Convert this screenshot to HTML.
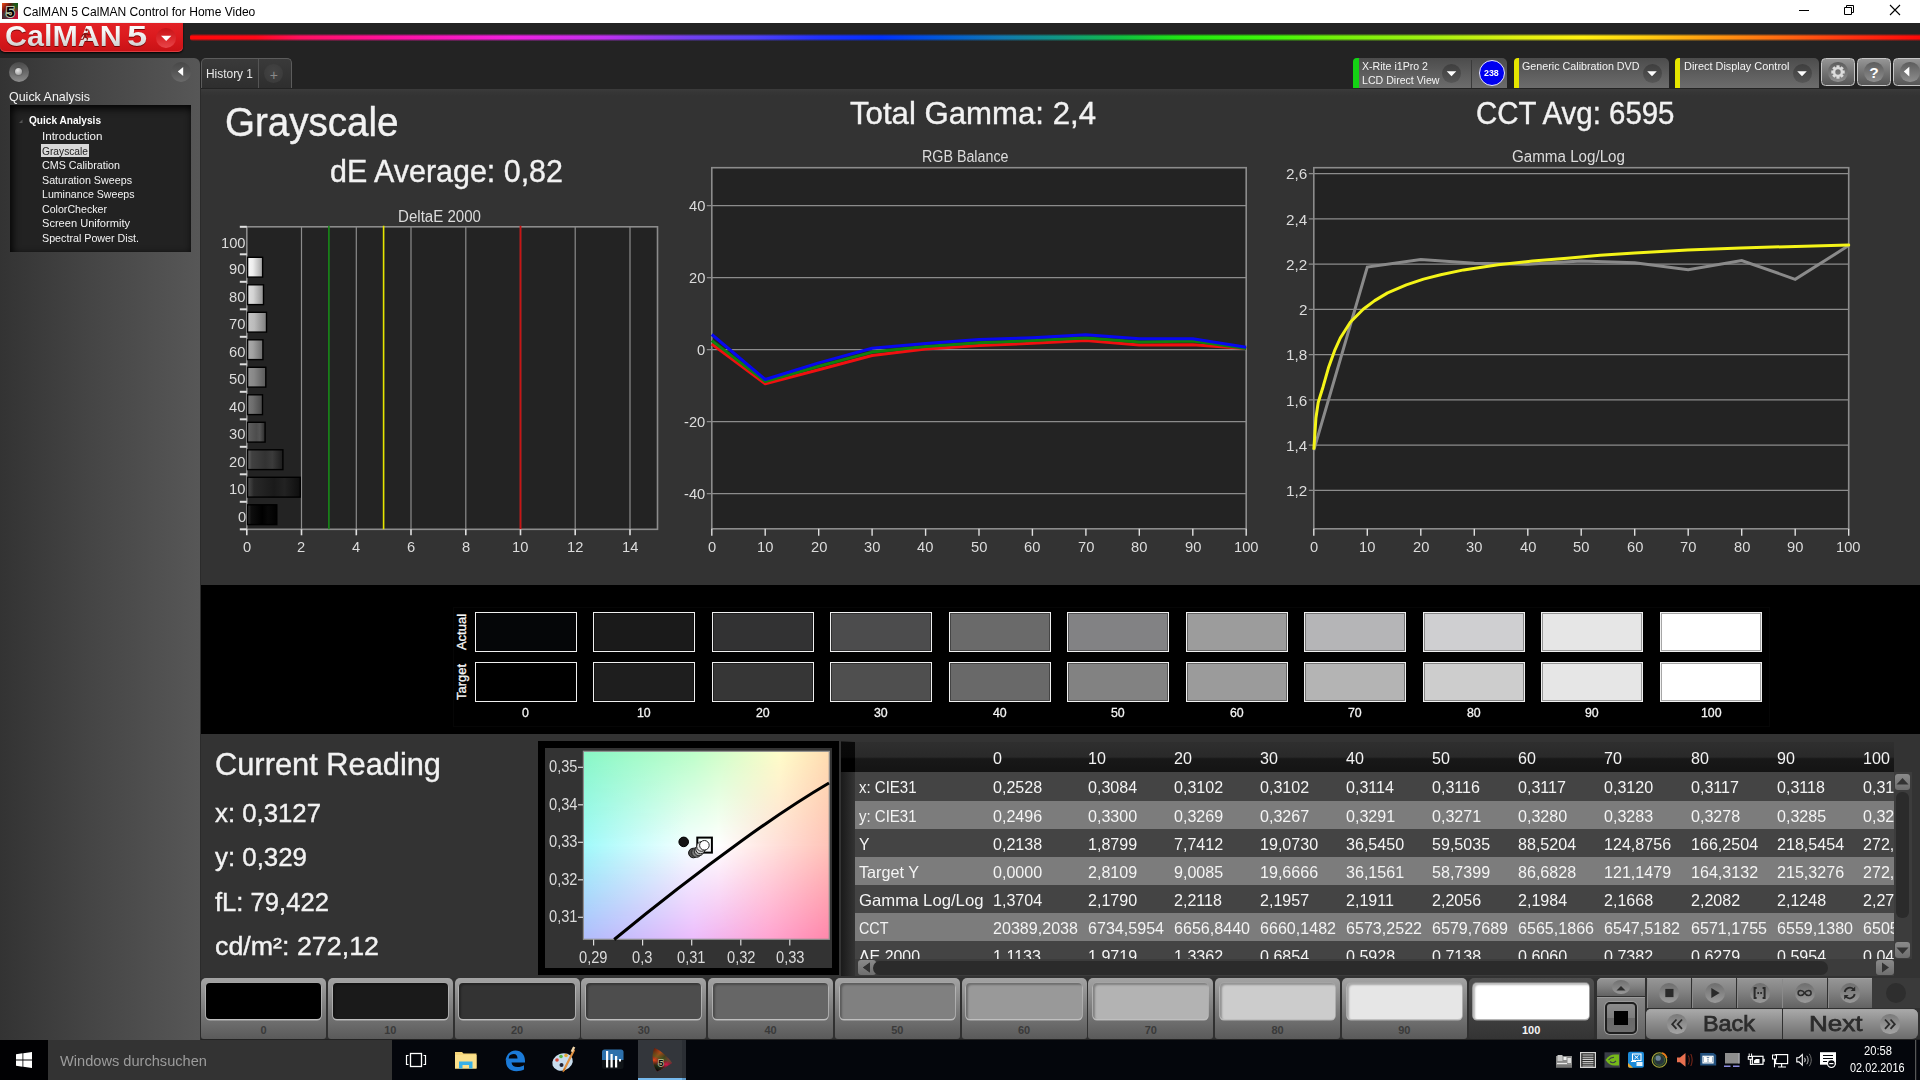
<!DOCTYPE html>
<html lang="de"><head><meta charset="utf-8"><title>CalMAN 5 CalMAN Control for Home Video</title>
<style>
html,body{margin:0;padding:0;background:#232323;}
body{width:1920px;height:1080px;position:relative;overflow:hidden;font-family:"Liberation Sans",sans-serif;}
.t{position:absolute;white-space:nowrap;line-height:1;transform-origin:0 50%;}
svg{position:absolute;left:0;top:0;overflow:visible}
svg text{font-family:"Liberation Sans",sans-serif;}
</style></head><body>
<div style="position:absolute;left:0px;top:0px;width:1920px;height:23px;background:#ffffff;"></div>
<svg width="24" height="24"><defs><linearGradient id="ig" x1="0" y1="0" x2="1" y2="1"><stop offset="0" stop-color="#f05018"/><stop offset="0.3" stop-color="#701010"/><stop offset="0.5" stop-color="#385a28"/><stop offset="0.75" stop-color="#a01838"/><stop offset="1" stop-color="#d00838"/></linearGradient><linearGradient id="ig2" x1="1" y1="0" x2="0" y2="1"><stop offset="0" stop-color="#0a5a10"/><stop offset="0.35" stop-color="#0a5a10" stop-opacity="0"/><stop offset="0.7" stop-color="#402080" stop-opacity="0"/><stop offset="1" stop-color="#501010"/></linearGradient></defs><rect x="2" y="3" width="16" height="16" fill="url(#ig)"/><rect x="2" y="3" width="16" height="16" fill="url(#ig2)"/><text x="10.200" y="16.600" font-size="15.500" font-weight="bold" fill="#000" stroke="#d8ecd0" stroke-width="1.800" paint-order="stroke" stroke-opacity="0.800" text-anchor="middle">5</text></svg>
<span class="t" style="left:23.00px;top:6.10px;font-size:12.4px;color:#000;transform:scaleX(0.9732);">CalMAN 5 CalMAN Control for Home Video</span>
<svg width="1920" height="23"><path d="M1799 10.5h10" stroke="#000" stroke-width="1" fill="none"/><path d="M1844.5 7.5h7v7h-7z M1846.5 7.5v-2h7v7h-2" stroke="#000" stroke-width="1" fill="none"/><path d="M1890 5l10 10M1900 5l-10 10" stroke="#000" stroke-width="1.1" fill="none"/></svg>
<div style="position:absolute;left:0px;top:23px;width:1920px;height:66px;background:#232323;"></div>
<div style="position:absolute;left:190px;top:34px;width:1730px;height:7.4px;background:linear-gradient(180deg,rgba(35,35,35,.9) 0%,rgba(35,35,35,0) 32%,rgba(35,35,35,0) 68%,rgba(35,35,35,.9) 100%),linear-gradient(90deg,#ff0808 0%,#ff0818 3.8%,#ff1060 6.4%,#ff10a0 11.6%,#f020e0 18.6%,#c030f0 23.9%,#7040f0 29%,#5040f8 32.6%,#2030ff 36.4%,#0030ff 39.9%,#0058d8 43.4%,#1078b0 46.9%,#109880 50.4%,#10c040 53.9%,#20e810 57.4%,#40f808 62.7%,#70f008 66.1%,#a0f010 71.7%,#e0f010 76.9%,#fff010 80.5%,#ffd010 83.9%,#ffa010 87.5%,#ff6010 92.7%,#ff3010 96.2%,#ff0808 100%);border-radius:3px 0 0 3px;"></div>
<div style="position:absolute;left:0px;top:23px;width:182.5px;height:29.3px;background:linear-gradient(180deg,#e22226 0%,#dc1a1e 45%,#c81216 100%);border-radius:0 0 5px 5px;box-shadow:0 1px 2px #000,inset 0 -1px 0 rgba(255,140,140,.35);"></div>
<span class="t" style="left:4.80px;top:21.40px;font-size:29.3px;color:#f0eeee;font-weight:bold;transform:scaleX(1.0398);background:linear-gradient(180deg,#ffffff 0%,#f4f4f4 40%,#c4c4c4 100%);-webkit-background-clip:text;background-clip:text;color:transparent;filter:drop-shadow(0 1px 0.6px rgba(90,0,0,.75));">CalMAN</span>
<span class="t" style="left:127.40px;top:21.40px;font-size:29.3px;color:#f0eeee;font-weight:bold;transform:scaleX(1.2396);background:linear-gradient(180deg,#ffffff 0%,#f4f4f4 40%,#c4c4c4 100%);-webkit-background-clip:text;background-clip:text;color:transparent;filter:drop-shadow(0 1px 0.6px rgba(90,0,0,.75));">5</span>
<svg width="200" height="60"><path d="M86.500 31.200a1.300 1.300 0 1 1 0.100 0zM84.200 33l2.600-0.300l1.800 1.600l1.900-0.400l0.200 0.800l-2.500 0.700l-1.300-0.900l-0.700 2.200l2 1.500l-0.900 2.800l-0.900-0.200l0.500-2.100l-2.200-1.200l-1.300 2.300l-2.700 0.300l-0.100-0.900l2.100-0.500l1.500-3.600l-1.200 0.300l-1 1.600l-0.800-0.500l1.300-2.200z" fill="#8a1010"/></svg>
<div style="position:absolute;left:156.2px;top:27.8px;width:19.8px;height:19.8px;border-radius:50%;background:linear-gradient(180deg,#c81418 0%,#dc2a2e 55%,#e8464a 100%);"></div>
<svg width="200" height="60"><path d="M161 35.800h10.400l-5.200 5.200z" fill="#fff"/></svg>
<div style="position:absolute;left:0px;top:58px;width:199.5px;height:982px;background:linear-gradient(90deg,#333 0%,#454545 45%,#575757 100%);border-radius:0 6px 0 0;"></div>
<div style="position:absolute;left:199.5px;top:88px;width:1.5px;height:952px;background:#2b2b2b;"></div>
<div style="position:absolute;left:9px;top:62px;width:20px;height:20px;border-radius:50%;background:linear-gradient(180deg,#4a4a4a 0%,#6c6c6c 55%,#8e8e8e 100%);"></div>
<div style="position:absolute;left:14.7px;top:67.7px;width:7.5px;height:7.5px;border-radius:50%;background:radial-gradient(circle at 38% 32%,#e6e6e6 0,#b4b4b4 55%,#8a8a8a 100%);box-shadow:0 0 1.5px rgba(0,0,0,.6);"></div>
<div style="position:absolute;left:171px;top:62px;width:20px;height:20px;border-radius:50%;background:linear-gradient(180deg,#484848 0%,#565656 50%,#6a6a6a 100%);"></div>
<svg width="200" height="100"><path d="M177.800 71.500l5.400-4.400v8.800z" fill="#fff"/></svg>
<span class="t" style="left:9.00px;top:90.00px;font-size:13px;color:#f2f2f2;transform:scaleX(0.9582);">Quick Analysis</span>
<div style="position:absolute;left:10px;top:105px;width:181px;height:147px;background:#222;box-shadow:inset 2px 3px 8px #000;"></div>
<span class="t" style="left:29.00px;top:114.97px;font-size:11.5px;color:#fff;font-weight:bold;transform:scaleX(0.8777);">Quick Analysis</span>
<svg width="200" height="200"><path d="M19 123h3.5v-3.5z" fill="#555"/></svg>
<div style="position:absolute;left:41px;top:143.5px;width:47.5px;height:13px;background:#d8d8d8;"></div>
<span class="t" style="left:42.00px;top:131.19px;font-size:11px;color:#f4f4f4;transform:scaleX(1.0525);">Introduction</span>
<span class="t" style="left:42.00px;top:145.69px;font-size:11px;color:#222;transform:scaleX(0.9290);">Grayscale</span>
<span class="t" style="left:42.00px;top:160.19px;font-size:11px;color:#f4f4f4;transform:scaleX(0.9740);">CMS Calibration</span>
<span class="t" style="left:42.00px;top:174.69px;font-size:11px;color:#f4f4f4;transform:scaleX(0.9747);">Saturation Sweeps</span>
<span class="t" style="left:42.00px;top:189.19px;font-size:11px;color:#f4f4f4;transform:scaleX(0.9635);">Luminance Sweeps</span>
<span class="t" style="left:42.00px;top:204.19px;font-size:11px;color:#f4f4f4;transform:scaleX(0.9666);">ColorChecker</span>
<span class="t" style="left:42.00px;top:218.19px;font-size:11px;color:#f4f4f4;transform:scaleX(1.0067);">Screen Uniformity</span>
<span class="t" style="left:42.00px;top:233.19px;font-size:11px;color:#f4f4f4;transform:scaleX(0.9734);">Spectral Power Dist.</span>
<div style="position:absolute;left:200.5px;top:58px;width:91.5px;height:30px;background:linear-gradient(180deg,#3a3a3a,#2e2e2e);border-radius:5px 5px 0 0;border:1px solid #5c5c5c;border-bottom:none;box-sizing:border-box;"></div>
<div style="position:absolute;left:258px;top:59px;width:1px;height:29px;background:#555;"></div>
<span class="t" style="left:206.00px;top:67.84px;font-size:12px;color:#e8e8e8;transform:scaleX(0.9927);">History 1</span>
<div style="position:absolute;left:264px;top:64px;width:19px;height:19px;border-radius:50%;background:radial-gradient(circle at 50% 40%,#444,#383838);"></div>
<span class="t" style="left:269.71px;top:68.15px;font-size:14px;color:#8a8a8a;">+</span>
<div style="position:absolute;left:201px;top:88.6px;width:1719px;height:496.4px;background:linear-gradient(180deg,#3b3b3b 0,#363636 3px,#333 7px);"></div>
<div style="position:absolute;left:201px;top:585px;width:1719px;height:149px;background:#000;"></div>
<div style="position:absolute;left:201px;top:734px;width:1719px;height:244px;background:#333333;"></div>
<span class="t" style="left:224.50px;top:101.74px;font-size:40px;color:#f2f2f2;transform:scaleX(0.9636);-webkit-text-stroke:0.4px #f2f2f2;">Grayscale</span>
<span class="t" style="left:329.50px;top:156.10px;font-size:31.3px;color:#f2f2f2;transform:scaleX(0.9725);-webkit-text-stroke:0.4px #f2f2f2;">dE Average: 0,82</span>
<span class="t" style="left:849.80px;top:97.54px;font-size:31.5px;color:#f2f2f2;transform:scaleX(0.9895);-webkit-text-stroke:0.4px #f2f2f2;">Total Gamma: 2,4</span>
<span class="t" style="left:1475.80px;top:97.64px;font-size:31.5px;color:#f2f2f2;transform:scaleX(0.9342);-webkit-text-stroke:0.4px #f2f2f2;">CCT Avg: 6595</span>
<svg width="1920" height="1080"><defs><linearGradient id="b0" x1="0" x2="1"><stop offset="0" stop-color="rgb(52,52,52)"/><stop offset="0.12" stop-color="rgb(14,14,14)"/><stop offset="0.5" stop-color="rgb(0,0,0)"/><stop offset="0.7" stop-color="rgb(8,8,8)"/><stop offset="1" stop-color="rgb(0,0,0)"/></linearGradient><linearGradient id="b1" x1="0" x2="1"><stop offset="0" stop-color="rgb(78,78,78)"/><stop offset="0.12" stop-color="rgb(40,40,40)"/><stop offset="0.5" stop-color="rgb(26,26,26)"/><stop offset="0.7" stop-color="rgb(34,34,34)"/><stop offset="1" stop-color="rgb(14,14,14)"/></linearGradient><linearGradient id="b2" x1="0" x2="1"><stop offset="0" stop-color="rgb(103,103,103)"/><stop offset="0.12" stop-color="rgb(65,65,65)"/><stop offset="0.5" stop-color="rgb(51,51,51)"/><stop offset="0.7" stop-color="rgb(59,59,59)"/><stop offset="1" stop-color="rgb(28,28,28)"/></linearGradient><linearGradient id="b3" x1="0" x2="1"><stop offset="0" stop-color="rgb(129,129,129)"/><stop offset="0.12" stop-color="rgb(91,91,91)"/><stop offset="0.5" stop-color="rgb(77,77,77)"/><stop offset="0.7" stop-color="rgb(85,85,85)"/><stop offset="1" stop-color="rgb(42,42,42)"/></linearGradient><linearGradient id="b4" x1="0" x2="1"><stop offset="0" stop-color="rgb(120,120,120)"/><stop offset="0.35" stop-color="rgb(110,110,110)"/><stop offset="1" stop-color="rgb(71,71,71)"/></linearGradient><linearGradient id="b5" x1="0" x2="1"><stop offset="0" stop-color="rgb(146,146,146)"/><stop offset="0.35" stop-color="rgb(136,136,136)"/><stop offset="1" stop-color="rgb(89,89,89)"/></linearGradient><linearGradient id="b6" x1="0" x2="1"><stop offset="0" stop-color="rgb(171,171,171)"/><stop offset="0.35" stop-color="rgb(161,161,161)"/><stop offset="1" stop-color="rgb(107,107,107)"/></linearGradient><linearGradient id="b7" x1="0" x2="1"><stop offset="0" stop-color="rgb(197,197,197)"/><stop offset="0.35" stop-color="rgb(187,187,187)"/><stop offset="1" stop-color="rgb(125,125,125)"/></linearGradient><linearGradient id="b8" x1="0" x2="1"><stop offset="0" stop-color="rgb(222,222,222)"/><stop offset="0.35" stop-color="rgb(212,212,212)"/><stop offset="1" stop-color="rgb(142,142,142)"/></linearGradient><linearGradient id="b9" x1="0" x2="1"><stop offset="0" stop-color="rgb(248,248,248)"/><stop offset="0.35" stop-color="rgb(238,238,238)"/><stop offset="1" stop-color="rgb(161,161,161)"/></linearGradient><linearGradient id="b10" x1="0" x2="1"><stop offset="0" stop-color="rgb(255,255,255)"/><stop offset="0.35" stop-color="rgb(255,255,255)"/><stop offset="1" stop-color="rgb(178,178,178)"/></linearGradient></defs><rect x="246.8" y="226.8" width="410.7" height="302.49999999999994" fill="#232323" stroke="#8c8c8c" stroke-width="1.6"/><path d="M301.5 226.8V529.3" stroke="#8c8c8c" stroke-width="1.2"/><path d="M356.3 226.8V529.3" stroke="#8c8c8c" stroke-width="1.2"/><path d="M411.0 226.8V529.3" stroke="#8c8c8c" stroke-width="1.2"/><path d="M465.8 226.8V529.3" stroke="#8c8c8c" stroke-width="1.2"/><path d="M520.5 226.8V529.3" stroke="#8c8c8c" stroke-width="1.2"/><path d="M575.2 226.8V529.3" stroke="#8c8c8c" stroke-width="1.2"/><path d="M630.0 226.8V529.3" stroke="#8c8c8c" stroke-width="1.2"/><path d="M328.9 225.8V529.3" stroke="#188a18" stroke-width="1.6"/><path d="M383.6 225.8V529.3" stroke="#e6e600" stroke-width="1.6"/><path d="M520.5 225.8V529.3" stroke="#c81414" stroke-width="1.8"/><path d="M239.8 501.8h7" stroke="#e0e0e0" stroke-width="2"/><rect x="247.6" y="504.8" width="29.2" height="19.8" fill="url(#b0)" stroke="#000" stroke-width="1.4"/><path d="M239.8 474.3h7" stroke="#e0e0e0" stroke-width="2"/><rect x="247.6" y="477.3" width="52.7" height="19.8" fill="url(#b1)" stroke="#000" stroke-width="1.4"/><path d="M239.8 446.8h7" stroke="#e0e0e0" stroke-width="2"/><rect x="247.6" y="449.8" width="35.3" height="19.8" fill="url(#b2)" stroke="#000" stroke-width="1.4"/><path d="M239.8 419.3h7" stroke="#e0e0e0" stroke-width="2"/><rect x="247.6" y="422.3" width="17.5" height="19.8" fill="url(#b3)" stroke="#000" stroke-width="1.4"/><path d="M239.8 391.8h7" stroke="#e0e0e0" stroke-width="2"/><rect x="247.6" y="394.8" width="14.9" height="19.8" fill="url(#b4)" stroke="#000" stroke-width="1.4"/><path d="M239.8 364.3h7" stroke="#e0e0e0" stroke-width="2"/><rect x="247.6" y="367.3" width="18.2" height="19.8" fill="url(#b5)" stroke="#000" stroke-width="1.4"/><path d="M239.8 336.8h7" stroke="#e0e0e0" stroke-width="2"/><rect x="247.6" y="339.8" width="15.3" height="19.8" fill="url(#b6)" stroke="#000" stroke-width="1.4"/><path d="M239.8 309.3h7" stroke="#e0e0e0" stroke-width="2"/><rect x="247.6" y="312.3" width="18.9" height="19.8" fill="url(#b7)" stroke="#000" stroke-width="1.4"/><path d="M239.8 281.8h7" stroke="#e0e0e0" stroke-width="2"/><rect x="247.6" y="284.8" width="15.9" height="19.8" fill="url(#b8)" stroke="#000" stroke-width="1.4"/><path d="M239.8 254.3h7" stroke="#e0e0e0" stroke-width="2"/><rect x="247.6" y="257.3" width="15.0" height="19.8" fill="url(#b9)" stroke="#000" stroke-width="1.4"/><path d="M239.8 226.8h7" stroke="#e0e0e0" stroke-width="2"/><path d="M239.8 529.3h7" stroke="#e0e0e0" stroke-width="2"/><path d="M246.8 529.3v6" stroke="#e0e0e0" stroke-width="1.6"/><path d="M301.5 529.3v6" stroke="#e0e0e0" stroke-width="1.6"/><path d="M356.3 529.3v6" stroke="#e0e0e0" stroke-width="1.6"/><path d="M411.0 529.3v6" stroke="#e0e0e0" stroke-width="1.6"/><path d="M465.8 529.3v6" stroke="#e0e0e0" stroke-width="1.6"/><path d="M520.5 529.3v6" stroke="#e0e0e0" stroke-width="1.6"/><path d="M575.2 529.3v6" stroke="#e0e0e0" stroke-width="1.6"/><path d="M630.0 529.3v6" stroke="#e0e0e0" stroke-width="1.6"/><rect x="711.8" y="167.7" width="534.4000000000001" height="361.09999999999997" fill="#232323" stroke="#8c8c8c" stroke-width="1.6"/><path d="M706.8 205.6H1246.2" stroke="#8c8c8c" stroke-width="1.3"/><path d="M706.8 277.6H1246.2" stroke="#8c8c8c" stroke-width="1.3"/><path d="M706.8 349.6H1246.2" stroke="#8c8c8c" stroke-width="1.3"/><path d="M706.8 421.6H1246.2" stroke="#8c8c8c" stroke-width="1.3"/><path d="M706.8 493.6H1246.2" stroke="#8c8c8c" stroke-width="1.3"/><path d="M711.8 528.8v7" stroke="#e0e0e0" stroke-width="1.4"/><path d="M765.2 528.8v7" stroke="#e0e0e0" stroke-width="1.4"/><path d="M818.7 528.8v7" stroke="#e0e0e0" stroke-width="1.4"/><path d="M872.1 528.8v7" stroke="#e0e0e0" stroke-width="1.4"/><path d="M925.6 528.8v7" stroke="#e0e0e0" stroke-width="1.4"/><path d="M979.0 528.8v7" stroke="#e0e0e0" stroke-width="1.4"/><path d="M1032.4 528.8v7" stroke="#e0e0e0" stroke-width="1.4"/><path d="M1085.9 528.8v7" stroke="#e0e0e0" stroke-width="1.4"/><path d="M1139.3 528.8v7" stroke="#e0e0e0" stroke-width="1.4"/><path d="M1192.8 528.8v7" stroke="#e0e0e0" stroke-width="1.4"/><path d="M1246.2 528.8v7" stroke="#e0e0e0" stroke-width="1.4"/><polyline points="711.8,344.0 765.2,383.8 818.7,369.8 872.1,355.5 925.6,348.9 979.0,345.6 1032.4,343.3 1085.9,340.6 1139.3,344.9 1192.8,344.7 1246.2,348.5" fill="none" stroke="#f01010" stroke-width="3" stroke-linejoin="round"/><polyline points="711.8,340.6 765.2,381.6 818.7,366.2 872.1,352.1 925.6,346.4 979.0,342.8 1032.4,340.6 1085.9,337.9 1139.3,342.0 1192.8,341.1 1246.2,348.5" fill="none" stroke="#108010" stroke-width="3" stroke-linejoin="round"/><polyline points="711.8,334.5 765.2,379.5 818.7,362.9 872.1,348.3 925.6,343.5 979.0,339.5 1032.4,337.7 1085.9,334.8 1139.3,338.8 1192.8,338.8 1246.2,347.3" fill="none" stroke="#0808f0" stroke-width="3" stroke-linejoin="round"/><rect x="1313.8" y="167.7" width="534.9000000000001" height="361.09999999999997" fill="#232323" stroke="#8c8c8c" stroke-width="1.6"/><path d="M1308.8 173.6H1848.7" stroke="#8c8c8c" stroke-width="1.3"/><path d="M1308.8 218.9H1848.7" stroke="#8c8c8c" stroke-width="1.3"/><path d="M1308.8 264.1H1848.7" stroke="#8c8c8c" stroke-width="1.3"/><path d="M1308.8 309.4H1848.7" stroke="#8c8c8c" stroke-width="1.3"/><path d="M1308.8 354.6H1848.7" stroke="#8c8c8c" stroke-width="1.3"/><path d="M1308.8 399.9H1848.7" stroke="#8c8c8c" stroke-width="1.3"/><path d="M1308.8 445.2H1848.7" stroke="#8c8c8c" stroke-width="1.3"/><path d="M1308.8 490.4H1848.7" stroke="#8c8c8c" stroke-width="1.3"/><path d="M1313.8 528.8v7" stroke="#e0e0e0" stroke-width="1.4"/><path d="M1367.3 528.8v7" stroke="#e0e0e0" stroke-width="1.4"/><path d="M1420.8 528.8v7" stroke="#e0e0e0" stroke-width="1.4"/><path d="M1474.3 528.8v7" stroke="#e0e0e0" stroke-width="1.4"/><path d="M1527.8 528.8v7" stroke="#e0e0e0" stroke-width="1.4"/><path d="M1581.2 528.8v7" stroke="#e0e0e0" stroke-width="1.4"/><path d="M1634.7 528.8v7" stroke="#e0e0e0" stroke-width="1.4"/><path d="M1688.2 528.8v7" stroke="#e0e0e0" stroke-width="1.4"/><path d="M1741.7 528.8v7" stroke="#e0e0e0" stroke-width="1.4"/><path d="M1795.2 528.8v7" stroke="#e0e0e0" stroke-width="1.4"/><path d="M1848.7 528.8v7" stroke="#e0e0e0" stroke-width="1.4"/><polyline points="1313.8,450.1 1367.3,267.1 1420.8,259.6 1474.3,263.3 1527.8,264.3 1581.2,261.1 1634.7,262.7 1688.2,269.8 1741.7,260.5 1795.2,279.3 1848.7,245.6" fill="none" stroke="#8a8a8a" stroke-width="3" stroke-linejoin="miter"/><polyline points="1313.9,448.5 1315.9,418.3 1318.2,402.5 1323.1,386.7 1328.8,366.7 1334.5,350.9 1340.3,338 1350.3,322.2 1363.2,309.3 1374.7,300.6 1387.6,292.9 1406.3,284.9 1423.5,279.1 1440.7,274.8 1463.7,269.9 1498.1,264.8 1532.6,261 1567,258.2 1600,255.3 1634.7,252.9 1687.7,250 1740.7,248 1795.7,246.4 1848.7,245.1" fill="none" stroke="#f4f418" stroke-width="3" stroke-linejoin="round" stroke-linecap="round"/></svg>
<span class="t" style="left:398.30px;top:208.66px;font-size:16px;color:#dcdcdc;transform:scaleX(0.9425);">DeltaE 2000</span>
<span class="t" style="left:922.25px;top:149.16px;font-size:16px;color:#dcdcdc;transform:scaleX(0.8923);">RGB Balance</span>
<span class="t" style="left:1511.50px;top:149.16px;font-size:16px;color:#dcdcdc;transform:scaleX(0.9481);">Gamma Log/Log</span>
<span class="t" style="left:237.62px;top:508.70px;font-size:15px;color:#dcdcdc;transform:scaleX(0.9800);">0</span>
<span class="t" style="left:229.45px;top:481.20px;font-size:15px;color:#dcdcdc;transform:scaleX(0.9800);">10</span>
<span class="t" style="left:229.45px;top:453.70px;font-size:15px;color:#dcdcdc;transform:scaleX(0.9800);">20</span>
<span class="t" style="left:229.45px;top:426.20px;font-size:15px;color:#dcdcdc;transform:scaleX(0.9800);">30</span>
<span class="t" style="left:229.45px;top:398.70px;font-size:15px;color:#dcdcdc;transform:scaleX(0.9800);">40</span>
<span class="t" style="left:229.45px;top:371.20px;font-size:15px;color:#dcdcdc;transform:scaleX(0.9800);">50</span>
<span class="t" style="left:229.45px;top:343.70px;font-size:15px;color:#dcdcdc;transform:scaleX(0.9800);">60</span>
<span class="t" style="left:229.45px;top:316.20px;font-size:15px;color:#dcdcdc;transform:scaleX(0.9800);">70</span>
<span class="t" style="left:229.45px;top:288.70px;font-size:15px;color:#dcdcdc;transform:scaleX(0.9800);">80</span>
<span class="t" style="left:229.45px;top:261.20px;font-size:15px;color:#dcdcdc;transform:scaleX(0.9800);">90</span>
<span class="t" style="left:221.27px;top:235.20px;font-size:15px;color:#dcdcdc;transform:scaleX(0.9800);">100</span>
<span class="t" style="left:242.71px;top:538.50px;font-size:15px;color:#dcdcdc;transform:scaleX(0.9800);">0</span>
<span class="t" style="left:297.45px;top:538.50px;font-size:15px;color:#dcdcdc;transform:scaleX(0.9800);">2</span>
<span class="t" style="left:352.19px;top:538.50px;font-size:15px;color:#dcdcdc;transform:scaleX(0.9800);">4</span>
<span class="t" style="left:406.93px;top:538.50px;font-size:15px;color:#dcdcdc;transform:scaleX(0.9800);">6</span>
<span class="t" style="left:461.67px;top:538.50px;font-size:15px;color:#dcdcdc;transform:scaleX(0.9800);">8</span>
<span class="t" style="left:512.32px;top:538.50px;font-size:15px;color:#dcdcdc;transform:scaleX(0.9800);">10</span>
<span class="t" style="left:567.06px;top:538.50px;font-size:15px;color:#dcdcdc;transform:scaleX(0.9800);">12</span>
<span class="t" style="left:621.80px;top:538.50px;font-size:15px;color:#dcdcdc;transform:scaleX(0.9800);">14</span>
<span class="t" style="left:689.15px;top:198.10px;font-size:15px;color:#dcdcdc;transform:scaleX(0.9800);">40</span>
<span class="t" style="left:689.15px;top:270.10px;font-size:15px;color:#dcdcdc;transform:scaleX(0.9800);">20</span>
<span class="t" style="left:697.32px;top:342.10px;font-size:15px;color:#dcdcdc;transform:scaleX(0.9800);">0</span>
<span class="t" style="left:684.25px;top:414.10px;font-size:15px;color:#dcdcdc;transform:scaleX(0.9800);">-20</span>
<span class="t" style="left:684.25px;top:486.10px;font-size:15px;color:#dcdcdc;transform:scaleX(0.9800);">-40</span>
<span class="t" style="left:707.71px;top:538.50px;font-size:15px;color:#dcdcdc;transform:scaleX(0.9800);">0</span>
<span class="t" style="left:1309.71px;top:538.50px;font-size:15px;color:#dcdcdc;transform:scaleX(0.9800);">0</span>
<span class="t" style="left:757.06px;top:538.50px;font-size:15px;color:#dcdcdc;transform:scaleX(0.9800);">10</span>
<span class="t" style="left:1359.11px;top:538.50px;font-size:15px;color:#dcdcdc;transform:scaleX(0.9800);">10</span>
<span class="t" style="left:810.50px;top:538.50px;font-size:15px;color:#dcdcdc;transform:scaleX(0.9800);">20</span>
<span class="t" style="left:1412.60px;top:538.50px;font-size:15px;color:#dcdcdc;transform:scaleX(0.9800);">20</span>
<span class="t" style="left:863.94px;top:538.50px;font-size:15px;color:#dcdcdc;transform:scaleX(0.9800);">30</span>
<span class="t" style="left:1466.09px;top:538.50px;font-size:15px;color:#dcdcdc;transform:scaleX(0.9800);">30</span>
<span class="t" style="left:917.38px;top:538.50px;font-size:15px;color:#dcdcdc;transform:scaleX(0.9800);">40</span>
<span class="t" style="left:1519.58px;top:538.50px;font-size:15px;color:#dcdcdc;transform:scaleX(0.9800);">40</span>
<span class="t" style="left:970.82px;top:538.50px;font-size:15px;color:#dcdcdc;transform:scaleX(0.9800);">50</span>
<span class="t" style="left:1573.07px;top:538.50px;font-size:15px;color:#dcdcdc;transform:scaleX(0.9800);">50</span>
<span class="t" style="left:1024.26px;top:538.50px;font-size:15px;color:#dcdcdc;transform:scaleX(0.9800);">60</span>
<span class="t" style="left:1626.56px;top:538.50px;font-size:15px;color:#dcdcdc;transform:scaleX(0.9800);">60</span>
<span class="t" style="left:1077.70px;top:538.50px;font-size:15px;color:#dcdcdc;transform:scaleX(0.9800);">70</span>
<span class="t" style="left:1680.05px;top:538.50px;font-size:15px;color:#dcdcdc;transform:scaleX(0.9800);">70</span>
<span class="t" style="left:1131.14px;top:538.50px;font-size:15px;color:#dcdcdc;transform:scaleX(0.9800);">80</span>
<span class="t" style="left:1733.54px;top:538.50px;font-size:15px;color:#dcdcdc;transform:scaleX(0.9800);">80</span>
<span class="t" style="left:1184.58px;top:538.50px;font-size:15px;color:#dcdcdc;transform:scaleX(0.9800);">90</span>
<span class="t" style="left:1787.03px;top:538.50px;font-size:15px;color:#dcdcdc;transform:scaleX(0.9800);">90</span>
<span class="t" style="left:1233.94px;top:538.50px;font-size:15px;color:#dcdcdc;transform:scaleX(0.9800);">100</span>
<span class="t" style="left:1836.44px;top:538.50px;font-size:15px;color:#dcdcdc;transform:scaleX(0.9800);">100</span>
<span class="t" style="left:1286.23px;top:166.30px;font-size:15px;color:#dcdcdc;transform:scaleX(1.0200);">2,6</span>
<span class="t" style="left:1286.23px;top:211.56px;font-size:15px;color:#dcdcdc;transform:scaleX(1.0200);">2,4</span>
<span class="t" style="left:1286.23px;top:256.82px;font-size:15px;color:#dcdcdc;transform:scaleX(1.0200);">2,2</span>
<span class="t" style="left:1298.99px;top:302.08px;font-size:15px;color:#dcdcdc;transform:scaleX(1.0200);">2</span>
<span class="t" style="left:1286.23px;top:347.34px;font-size:15px;color:#dcdcdc;transform:scaleX(1.0200);">1,8</span>
<span class="t" style="left:1286.23px;top:392.60px;font-size:15px;color:#dcdcdc;transform:scaleX(1.0200);">1,6</span>
<span class="t" style="left:1286.23px;top:437.86px;font-size:15px;color:#dcdcdc;transform:scaleX(1.0200);">1,4</span>
<span class="t" style="left:1286.23px;top:483.12px;font-size:15px;color:#dcdcdc;transform:scaleX(1.0200);">1,2</span>
<div style="position:absolute;left:453px;top:607px;width:1317px;height:120px;border:1px solid #060606;box-sizing:border-box;"></div>
<div style="position:absolute;left:474.8px;top:612px;width:102px;height:40px;background:#050608;border:1.3px solid #f0f0f0;box-sizing:border-box;box-shadow:inset 0 0 0 1px rgba(0,0,0,.35);"></div>
<div style="position:absolute;left:474.8px;top:662px;width:102px;height:40px;background:#000000;border:1.3px solid #f0f0f0;box-sizing:border-box;box-shadow:inset 0 0 0 1px rgba(0,0,0,.35);"></div>
<span class="t" style="left:522.37px;top:706.30px;font-size:13px;color:#f4f4f4;transform:scaleX(0.9500);-webkit-text-stroke:.3px #f4f4f4;">0</span>
<div style="position:absolute;left:593.3px;top:612px;width:102px;height:40px;background:#1a1a1a;border:1.3px solid #f0f0f0;box-sizing:border-box;box-shadow:inset 0 0 0 1px rgba(0,0,0,.35);"></div>
<div style="position:absolute;left:593.3px;top:662px;width:102px;height:40px;background:#1e1e1e;border:1.3px solid #f0f0f0;box-sizing:border-box;box-shadow:inset 0 0 0 1px rgba(0,0,0,.35);"></div>
<span class="t" style="left:637.43px;top:706.30px;font-size:13px;color:#f4f4f4;transform:scaleX(0.9500);-webkit-text-stroke:.3px #f4f4f4;">10</span>
<div style="position:absolute;left:711.8px;top:612px;width:102px;height:40px;background:#323233;border:1.3px solid #f0f0f0;box-sizing:border-box;box-shadow:inset 0 0 0 1px rgba(0,0,0,.35);"></div>
<div style="position:absolute;left:711.8px;top:662px;width:102px;height:40px;background:#363636;border:1.3px solid #f0f0f0;box-sizing:border-box;box-shadow:inset 0 0 0 1px rgba(0,0,0,.35);"></div>
<span class="t" style="left:755.93px;top:706.30px;font-size:13px;color:#f4f4f4;transform:scaleX(0.9500);-webkit-text-stroke:.3px #f4f4f4;">20</span>
<div style="position:absolute;left:830.3px;top:612px;width:102px;height:40px;background:#4c4c4d;border:1.3px solid #f0f0f0;box-sizing:border-box;box-shadow:inset 0 0 0 1px rgba(0,0,0,.35);"></div>
<div style="position:absolute;left:830.3px;top:662px;width:102px;height:40px;background:#4f4f4f;border:1.3px solid #f0f0f0;box-sizing:border-box;box-shadow:inset 0 0 0 1px rgba(0,0,0,.35);"></div>
<span class="t" style="left:874.43px;top:706.30px;font-size:13px;color:#f4f4f4;transform:scaleX(0.9500);-webkit-text-stroke:.3px #f4f4f4;">30</span>
<div style="position:absolute;left:948.8px;top:612px;width:102px;height:40px;background:#6a6a6a;border:1.3px solid #f0f0f0;box-sizing:border-box;box-shadow:inset 0 0 0 1px rgba(0,0,0,.35);"></div>
<div style="position:absolute;left:948.8px;top:662px;width:102px;height:40px;background:#696969;border:1.3px solid #f0f0f0;box-sizing:border-box;box-shadow:inset 0 0 0 1px rgba(0,0,0,.35);"></div>
<span class="t" style="left:992.93px;top:706.30px;font-size:13px;color:#f4f4f4;transform:scaleX(0.9500);-webkit-text-stroke:.3px #f4f4f4;">40</span>
<div style="position:absolute;left:1067.3px;top:612px;width:102px;height:40px;background:#828284;border:1.3px solid #f0f0f0;box-sizing:border-box;box-shadow:inset 0 0 0 1px rgba(0,0,0,.35);"></div>
<div style="position:absolute;left:1067.3px;top:662px;width:102px;height:40px;background:#828282;border:1.3px solid #f0f0f0;box-sizing:border-box;box-shadow:inset 0 0 0 1px rgba(0,0,0,.35);"></div>
<span class="t" style="left:1111.43px;top:706.30px;font-size:13px;color:#f4f4f4;transform:scaleX(0.9500);-webkit-text-stroke:.3px #f4f4f4;">50</span>
<div style="position:absolute;left:1185.8px;top:612px;width:102px;height:40px;background:#9c9c9c;border:1.3px solid #f0f0f0;box-sizing:border-box;box-shadow:inset 0 0 0 1px rgba(0,0,0,.35);"></div>
<div style="position:absolute;left:1185.8px;top:662px;width:102px;height:40px;background:#9b9b9b;border:1.3px solid #f0f0f0;box-sizing:border-box;box-shadow:inset 0 0 0 1px rgba(0,0,0,.35);"></div>
<span class="t" style="left:1229.93px;top:706.30px;font-size:13px;color:#f4f4f4;transform:scaleX(0.9500);-webkit-text-stroke:.3px #f4f4f4;">60</span>
<div style="position:absolute;left:1304.3px;top:612px;width:102px;height:40px;background:#b5b5b7;border:1.3px solid #f0f0f0;box-sizing:border-box;box-shadow:inset 0 0 0 1px rgba(0,0,0,.35);"></div>
<div style="position:absolute;left:1304.3px;top:662px;width:102px;height:40px;background:#b4b4b4;border:1.3px solid #f0f0f0;box-sizing:border-box;box-shadow:inset 0 0 0 1px rgba(0,0,0,.35);"></div>
<span class="t" style="left:1348.43px;top:706.30px;font-size:13px;color:#f4f4f4;transform:scaleX(0.9500);-webkit-text-stroke:.3px #f4f4f4;">70</span>
<div style="position:absolute;left:1422.8px;top:612px;width:102px;height:40px;background:#cfcfd1;border:1.3px solid #f0f0f0;box-sizing:border-box;box-shadow:inset 0 0 0 1px rgba(0,0,0,.35);"></div>
<div style="position:absolute;left:1422.8px;top:662px;width:102px;height:40px;background:#cdcdcd;border:1.3px solid #f0f0f0;box-sizing:border-box;box-shadow:inset 0 0 0 1px rgba(0,0,0,.35);"></div>
<span class="t" style="left:1466.93px;top:706.30px;font-size:13px;color:#f4f4f4;transform:scaleX(0.9500);-webkit-text-stroke:.3px #f4f4f4;">80</span>
<div style="position:absolute;left:1541.3px;top:612px;width:102px;height:40px;background:#e6e6e6;border:1.3px solid #f0f0f0;box-sizing:border-box;box-shadow:inset 0 0 0 1px rgba(0,0,0,.35);"></div>
<div style="position:absolute;left:1541.3px;top:662px;width:102px;height:40px;background:#e6e6e6;border:1.3px solid #f0f0f0;box-sizing:border-box;box-shadow:inset 0 0 0 1px rgba(0,0,0,.35);"></div>
<span class="t" style="left:1585.43px;top:706.30px;font-size:13px;color:#f4f4f4;transform:scaleX(0.9500);-webkit-text-stroke:.3px #f4f4f4;">90</span>
<div style="position:absolute;left:1659.8px;top:612px;width:102px;height:40px;background:#ffffff;border:1.3px solid #f0f0f0;box-sizing:border-box;box-shadow:inset 0 0 0 1px rgba(0,0,0,.35);"></div>
<div style="position:absolute;left:1659.8px;top:662px;width:102px;height:40px;background:#ffffff;border:1.3px solid #f0f0f0;box-sizing:border-box;box-shadow:inset 0 0 0 1px rgba(0,0,0,.35);"></div>
<span class="t" style="left:1700.50px;top:706.30px;font-size:13px;color:#f4f4f4;transform:scaleX(0.9500);-webkit-text-stroke:.3px #f4f4f4;">100</span>
<span class="t" style="left:455.3px;top:651.5px;font-size:13px;color:#f8f8f8;transform-origin:0 0;transform:rotate(-90deg);width:40px;text-align:center;-webkit-text-stroke:.3px #f8f8f8;">Actual</span>
<span class="t" style="left:455.3px;top:701.8px;font-size:13px;color:#f8f8f8;transform-origin:0 0;transform:rotate(-90deg);width:40px;text-align:center;-webkit-text-stroke:.3px #f8f8f8;">Target</span>
<span class="t" style="left:215.00px;top:749.34px;font-size:31.5px;color:#f2f2f2;transform:scaleX(0.9778);-webkit-text-stroke:0.4px #f2f2f2;">Current Reading</span>
<span class="t" style="left:215.00px;top:800.49px;font-size:26px;color:#f2f2f2;transform:scaleX(0.9909);-webkit-text-stroke:0.4px #f2f2f2;">x: 0,3127</span>
<span class="t" style="left:215.00px;top:844.49px;font-size:26px;color:#f2f2f2;transform:scaleX(0.9945);-webkit-text-stroke:0.4px #f2f2f2;">y: 0,329</span>
<span class="t" style="left:215.00px;top:889.49px;font-size:26px;color:#f2f2f2;transform:scaleX(0.9857);-webkit-text-stroke:0.4px #f2f2f2;">fL: 79,422</span>
<span class="t" style="left:215.00px;top:933.49px;font-size:26px;color:#f2f2f2;transform:scaleX(1.0316);-webkit-text-stroke:0.4px #f2f2f2;">cd/m²: 272,12</span>
<div style="position:absolute;left:537.8px;top:741.3px;width:301.2px;height:234px;background:#333;border:7px solid #000;box-sizing:border-box;"></div>
<svg width="1920" height="1080"><defs><linearGradient id="cg1" x1="0" y1="0" x2="1" y2="0"><stop offset="0" stop-color="#88f6c4"/><stop offset="0.45" stop-color="#bcfec8"/><stop offset="0.8" stop-color="#fffdc8"/><stop offset="1" stop-color="#ffdcb0"/></linearGradient><linearGradient id="cg2" x1="0" y1="0" x2="1" y2="0"><stop offset="0" stop-color="#b0bcfc"/><stop offset="0.45" stop-color="#ecbcfc"/><stop offset="0.75" stop-color="#ffa4d2"/><stop offset="1" stop-color="#ff86aa"/></linearGradient><linearGradient id="cg3" x1="0" y1="0" x2="1" y2="0"><stop offset="0" stop-color="#a0fafa"/><stop offset="0.42" stop-color="#f4ffff"/><stop offset="0.55" stop-color="#ffffff"/><stop offset="1" stop-color="#ffc4b8"/></linearGradient><linearGradient id="cm1" x1="0" y1="0" x2="0" y2="1"><stop offset="0" stop-color="#fff" stop-opacity="1"/><stop offset="0.5" stop-color="#fff" stop-opacity="0"/></linearGradient><linearGradient id="cm2" x1="0" y1="0" x2="0" y2="1"><stop offset="0.5" stop-color="#fff" stop-opacity="0"/><stop offset="1" stop-color="#fff" stop-opacity="1"/></linearGradient><mask id="mk1"><rect x="583" y="750" width="247" height="190" fill="url(#cm1)"/></mask><mask id="mk2"><rect x="583" y="750" width="247" height="190" fill="url(#cm2)"/></mask></defs><rect x="583.4" y="751.3" width="245.89999999999998" height="188.0" fill="url(#cg3)"/><rect x="583.4" y="751.3" width="245.89999999999998" height="188.0" fill="url(#cg1)" mask="url(#mk1)"/><rect x="583.4" y="751.3" width="245.89999999999998" height="188.0" fill="url(#cg2)" mask="url(#mk2)"/><rect x="583.4" y="751.3" width="245.89999999999998" height="188.0" fill="none" stroke="#8c8c8c" stroke-width="1.2"/><path d="M614.2 939.5C650 910 700 871 740.7 841.5S800 800 829 783" fill="none" stroke="#000" stroke-width="3"/><path d="M578 767.3h5" stroke="#ddd" stroke-width="1.2"/><path d="M578 804.8h5" stroke="#ddd" stroke-width="1.2"/><path d="M578 842.3h5" stroke="#ddd" stroke-width="1.2"/><path d="M578 879.8h5" stroke="#ddd" stroke-width="1.2"/><path d="M578 917.3h5" stroke="#ddd" stroke-width="1.2"/><path d="M593.6 939.5v6" stroke="#ddd" stroke-width="1.2"/><path d="M642.6 939.5v6" stroke="#ddd" stroke-width="1.2"/><path d="M691.7 939.5v6" stroke="#ddd" stroke-width="1.2"/><path d="M740.8 939.5v6" stroke="#ddd" stroke-width="1.2"/><path d="M789.8 939.5v6" stroke="#ddd" stroke-width="1.2"/><circle cx="683.7" cy="841.9" r="4.8" fill="#151515" stroke="#000" stroke-width="1"/><rect x="697.3" y="837.6" width="14.6" height="15" fill="none" stroke="#000" stroke-width="2"/><circle cx="693.4" cy="853" r="4.8" fill="#4a4a4a" stroke="#111" stroke-width="1"/><circle cx="696.5" cy="852.5" r="4.8" fill="#7c7c7c" stroke="#222" stroke-width="1"/><circle cx="699" cy="851" r="4.8" fill="#a8a8a8" stroke="#222" stroke-width="1"/><circle cx="700.5" cy="849" r="4.8" fill="#cfcfcf" stroke="#222" stroke-width="1"/><circle cx="701.5" cy="846.5" r="4.8" fill="#e8e8e8" stroke="#222" stroke-width="1"/><circle cx="704.4" cy="845.3" r="4.8" fill="#fff" stroke="#222" stroke-width="1"/></svg>
<span class="t" style="left:548.81px;top:759.36px;font-size:16px;color:#dcdcdc;transform:scaleX(0.9150);">0,35</span>
<span class="t" style="left:548.81px;top:796.86px;font-size:16px;color:#dcdcdc;transform:scaleX(0.9150);">0,34</span>
<span class="t" style="left:548.81px;top:834.36px;font-size:16px;color:#dcdcdc;transform:scaleX(0.9150);">0,33</span>
<span class="t" style="left:548.81px;top:871.86px;font-size:16px;color:#dcdcdc;transform:scaleX(0.9150);">0,32</span>
<span class="t" style="left:548.81px;top:909.36px;font-size:16px;color:#dcdcdc;transform:scaleX(0.9150);">0,31</span>
<span class="t" style="left:579.35px;top:949.86px;font-size:16px;color:#dcdcdc;transform:scaleX(0.9150);">0,29</span>
<span class="t" style="left:632.47px;top:949.86px;font-size:16px;color:#dcdcdc;transform:scaleX(0.9150);">0,3</span>
<span class="t" style="left:677.45px;top:949.86px;font-size:16px;color:#dcdcdc;transform:scaleX(0.9150);">0,31</span>
<span class="t" style="left:726.50px;top:949.86px;font-size:16px;color:#dcdcdc;transform:scaleX(0.9150);">0,32</span>
<span class="t" style="left:775.55px;top:949.86px;font-size:16px;color:#dcdcdc;transform:scaleX(0.9150);">0,33</span>
<div style="position:absolute;left:841px;top:741px;width:14px;height:235px;background:linear-gradient(90deg,#1a1a1a,#333);"></div>
<div style="position:absolute;left:841px;top:742px;width:14px;height:30.4px;background:linear-gradient(180deg,#0a0a0a 0%,#080808 50%,#000 56%);"></div>
<div style="position:absolute;left:855px;top:742px;width:1039px;height:30.4px;background:linear-gradient(180deg,#2f2f2f 0%,#292929 50%,#181818 56%,#141414 100%);"></div>
<div style="position:absolute;left:855px;top:741px;width:1038.5px;height:217.8px;overflow:hidden;">
<span class="t" style="left:137.70px;top:9.33px;font-size:16.5px;color:#f4f4f4;transform:scaleX(0.9750);">0</span>
<span class="t" style="left:233.00px;top:9.33px;font-size:16.5px;color:#f4f4f4;transform:scaleX(0.9750);">10</span>
<span class="t" style="left:319.00px;top:9.33px;font-size:16.5px;color:#f4f4f4;transform:scaleX(0.9750);">20</span>
<span class="t" style="left:404.90px;top:9.33px;font-size:16.5px;color:#f4f4f4;transform:scaleX(0.9750);">30</span>
<span class="t" style="left:491.20px;top:9.33px;font-size:16.5px;color:#f4f4f4;transform:scaleX(0.9750);">40</span>
<span class="t" style="left:577.40px;top:9.33px;font-size:16.5px;color:#f4f4f4;transform:scaleX(0.9750);">50</span>
<span class="t" style="left:663.40px;top:9.33px;font-size:16.5px;color:#f4f4f4;transform:scaleX(0.9750);">60</span>
<span class="t" style="left:749.40px;top:9.33px;font-size:16.5px;color:#f4f4f4;transform:scaleX(0.9750);">70</span>
<span class="t" style="left:835.50px;top:9.33px;font-size:16.5px;color:#f4f4f4;transform:scaleX(0.9750);">80</span>
<span class="t" style="left:921.50px;top:9.33px;font-size:16.5px;color:#f4f4f4;transform:scaleX(0.9750);">90</span>
<span class="t" style="left:1007.60px;top:9.33px;font-size:16.5px;color:#f4f4f4;transform:scaleX(0.9750);">100</span>
<div style="position:absolute;left:0;top:31.4px;width:1040px;height:28.2px;background:#444444;"></div>
<span class="t" style="left:4.00px;top:38.43px;font-size:16.5px;color:#f4f4f4;transform:scaleX(0.9087);">x: CIE31</span>
<span class="t" style="left:137.70px;top:38.43px;font-size:16.5px;color:#f4f4f4;transform:scaleX(0.9750);">0,2528</span>
<span class="t" style="left:233.00px;top:38.43px;font-size:16.5px;color:#f4f4f4;transform:scaleX(0.9750);">0,3084</span>
<span class="t" style="left:319.00px;top:38.43px;font-size:16.5px;color:#f4f4f4;transform:scaleX(0.9750);">0,3102</span>
<span class="t" style="left:404.90px;top:38.43px;font-size:16.5px;color:#f4f4f4;transform:scaleX(0.9750);">0,3102</span>
<span class="t" style="left:491.20px;top:38.43px;font-size:16.5px;color:#f4f4f4;transform:scaleX(0.9750);">0,3114</span>
<span class="t" style="left:577.40px;top:38.43px;font-size:16.5px;color:#f4f4f4;transform:scaleX(0.9750);">0,3116</span>
<span class="t" style="left:663.40px;top:38.43px;font-size:16.5px;color:#f4f4f4;transform:scaleX(0.9750);">0,3117</span>
<span class="t" style="left:749.40px;top:38.43px;font-size:16.5px;color:#f4f4f4;transform:scaleX(0.9750);">0,3120</span>
<span class="t" style="left:835.50px;top:38.43px;font-size:16.5px;color:#f4f4f4;transform:scaleX(0.9750);">0,3117</span>
<span class="t" style="left:921.50px;top:38.43px;font-size:16.5px;color:#f4f4f4;transform:scaleX(0.9750);">0,3118</span>
<span class="t" style="left:1007.60px;top:38.43px;font-size:16.5px;color:#f4f4f4;transform:scaleX(0.9750);">0,3127</span>
<div style="position:absolute;left:0;top:59.5px;width:1040px;height:28.2px;background:#7c7c7c;"></div>
<span class="t" style="left:4.00px;top:66.53px;font-size:16.5px;color:#f4f4f4;transform:scaleX(0.9087);">y: CIE31</span>
<span class="t" style="left:137.70px;top:66.53px;font-size:16.5px;color:#f4f4f4;transform:scaleX(0.9750);">0,2496</span>
<span class="t" style="left:233.00px;top:66.53px;font-size:16.5px;color:#f4f4f4;transform:scaleX(0.9750);">0,3300</span>
<span class="t" style="left:319.00px;top:66.53px;font-size:16.5px;color:#f4f4f4;transform:scaleX(0.9750);">0,3269</span>
<span class="t" style="left:404.90px;top:66.53px;font-size:16.5px;color:#f4f4f4;transform:scaleX(0.9750);">0,3267</span>
<span class="t" style="left:491.20px;top:66.53px;font-size:16.5px;color:#f4f4f4;transform:scaleX(0.9750);">0,3291</span>
<span class="t" style="left:577.40px;top:66.53px;font-size:16.5px;color:#f4f4f4;transform:scaleX(0.9750);">0,3271</span>
<span class="t" style="left:663.40px;top:66.53px;font-size:16.5px;color:#f4f4f4;transform:scaleX(0.9750);">0,3280</span>
<span class="t" style="left:749.40px;top:66.53px;font-size:16.5px;color:#f4f4f4;transform:scaleX(0.9750);">0,3283</span>
<span class="t" style="left:835.50px;top:66.53px;font-size:16.5px;color:#f4f4f4;transform:scaleX(0.9750);">0,3278</span>
<span class="t" style="left:921.50px;top:66.53px;font-size:16.5px;color:#f4f4f4;transform:scaleX(0.9750);">0,3285</span>
<span class="t" style="left:1007.60px;top:66.53px;font-size:16.5px;color:#f4f4f4;transform:scaleX(0.9750);">0,3290</span>
<div style="position:absolute;left:0;top:87.6px;width:1040px;height:28.2px;background:#444444;"></div>
<span class="t" style="left:4.00px;top:94.63px;font-size:16.5px;color:#f4f4f4;transform:scaleX(0.9540);">Y</span>
<span class="t" style="left:137.70px;top:94.63px;font-size:16.5px;color:#f4f4f4;transform:scaleX(0.9750);">0,2138</span>
<span class="t" style="left:233.00px;top:94.63px;font-size:16.5px;color:#f4f4f4;transform:scaleX(0.9750);">1,8799</span>
<span class="t" style="left:319.00px;top:94.63px;font-size:16.5px;color:#f4f4f4;transform:scaleX(0.9750);">7,7412</span>
<span class="t" style="left:404.90px;top:94.63px;font-size:16.5px;color:#f4f4f4;transform:scaleX(0.9750);">19,0730</span>
<span class="t" style="left:491.20px;top:94.63px;font-size:16.5px;color:#f4f4f4;transform:scaleX(0.9750);">36,5450</span>
<span class="t" style="left:577.40px;top:94.63px;font-size:16.5px;color:#f4f4f4;transform:scaleX(0.9750);">59,5035</span>
<span class="t" style="left:663.40px;top:94.63px;font-size:16.5px;color:#f4f4f4;transform:scaleX(0.9750);">88,5204</span>
<span class="t" style="left:749.40px;top:94.63px;font-size:16.5px;color:#f4f4f4;transform:scaleX(0.9750);">124,8756</span>
<span class="t" style="left:835.50px;top:94.63px;font-size:16.5px;color:#f4f4f4;transform:scaleX(0.9750);">166,2504</span>
<span class="t" style="left:921.50px;top:94.63px;font-size:16.5px;color:#f4f4f4;transform:scaleX(0.9750);">218,5454</span>
<span class="t" style="left:1007.60px;top:94.63px;font-size:16.5px;color:#f4f4f4;transform:scaleX(0.9750);">272,1200</span>
<div style="position:absolute;left:0;top:115.7px;width:1040px;height:28.2px;background:#7c7c7c;"></div>
<span class="t" style="left:4.00px;top:122.73px;font-size:16.5px;color:#f4f4f4;transform:scaleX(0.9812);">Target Y</span>
<span class="t" style="left:137.70px;top:122.73px;font-size:16.5px;color:#f4f4f4;transform:scaleX(0.9750);">0,0000</span>
<span class="t" style="left:233.00px;top:122.73px;font-size:16.5px;color:#f4f4f4;transform:scaleX(0.9750);">2,8109</span>
<span class="t" style="left:319.00px;top:122.73px;font-size:16.5px;color:#f4f4f4;transform:scaleX(0.9750);">9,0085</span>
<span class="t" style="left:404.90px;top:122.73px;font-size:16.5px;color:#f4f4f4;transform:scaleX(0.9750);">19,6666</span>
<span class="t" style="left:491.20px;top:122.73px;font-size:16.5px;color:#f4f4f4;transform:scaleX(0.9750);">36,1561</span>
<span class="t" style="left:577.40px;top:122.73px;font-size:16.5px;color:#f4f4f4;transform:scaleX(0.9750);">58,7399</span>
<span class="t" style="left:663.40px;top:122.73px;font-size:16.5px;color:#f4f4f4;transform:scaleX(0.9750);">86,6828</span>
<span class="t" style="left:749.40px;top:122.73px;font-size:16.5px;color:#f4f4f4;transform:scaleX(0.9750);">121,1479</span>
<span class="t" style="left:835.50px;top:122.73px;font-size:16.5px;color:#f4f4f4;transform:scaleX(0.9750);">164,3132</span>
<span class="t" style="left:921.50px;top:122.73px;font-size:16.5px;color:#f4f4f4;transform:scaleX(0.9750);">215,3276</span>
<span class="t" style="left:1007.60px;top:122.73px;font-size:16.5px;color:#f4f4f4;transform:scaleX(0.9750);">272,1200</span>
<div style="position:absolute;left:0;top:143.8px;width:1040px;height:28.2px;background:#444444;"></div>
<span class="t" style="left:4.00px;top:150.83px;font-size:16.5px;color:#f4f4f4;transform:scaleX(1.0130);">Gamma Log/Log</span>
<span class="t" style="left:137.70px;top:150.83px;font-size:16.5px;color:#f4f4f4;transform:scaleX(0.9750);">1,3704</span>
<span class="t" style="left:233.00px;top:150.83px;font-size:16.5px;color:#f4f4f4;transform:scaleX(0.9750);">2,1790</span>
<span class="t" style="left:319.00px;top:150.83px;font-size:16.5px;color:#f4f4f4;transform:scaleX(0.9750);">2,2118</span>
<span class="t" style="left:404.90px;top:150.83px;font-size:16.5px;color:#f4f4f4;transform:scaleX(0.9750);">2,1957</span>
<span class="t" style="left:491.20px;top:150.83px;font-size:16.5px;color:#f4f4f4;transform:scaleX(0.9750);">2,1911</span>
<span class="t" style="left:577.40px;top:150.83px;font-size:16.5px;color:#f4f4f4;transform:scaleX(0.9750);">2,2056</span>
<span class="t" style="left:663.40px;top:150.83px;font-size:16.5px;color:#f4f4f4;transform:scaleX(0.9750);">2,1984</span>
<span class="t" style="left:749.40px;top:150.83px;font-size:16.5px;color:#f4f4f4;transform:scaleX(0.9750);">2,1668</span>
<span class="t" style="left:835.50px;top:150.83px;font-size:16.5px;color:#f4f4f4;transform:scaleX(0.9750);">2,2082</span>
<span class="t" style="left:921.50px;top:150.83px;font-size:16.5px;color:#f4f4f4;transform:scaleX(0.9750);">2,1248</span>
<span class="t" style="left:1007.60px;top:150.83px;font-size:16.5px;color:#f4f4f4;transform:scaleX(0.9750);">2,2740</span>
<div style="position:absolute;left:0;top:171.9px;width:1040px;height:28.2px;background:#7c7c7c;"></div>
<span class="t" style="left:4.00px;top:178.93px;font-size:16.5px;color:#f4f4f4;transform:scaleX(0.8699);">CCT</span>
<span class="t" style="left:137.70px;top:178.93px;font-size:16.5px;color:#f4f4f4;transform:scaleX(0.9750);">20389,2038</span>
<span class="t" style="left:233.00px;top:178.93px;font-size:16.5px;color:#f4f4f4;transform:scaleX(0.9750);">6734,5954</span>
<span class="t" style="left:319.00px;top:178.93px;font-size:16.5px;color:#f4f4f4;transform:scaleX(0.9750);">6656,8440</span>
<span class="t" style="left:404.90px;top:178.93px;font-size:16.5px;color:#f4f4f4;transform:scaleX(0.9750);">6660,1482</span>
<span class="t" style="left:491.20px;top:178.93px;font-size:16.5px;color:#f4f4f4;transform:scaleX(0.9750);">6573,2522</span>
<span class="t" style="left:577.40px;top:178.93px;font-size:16.5px;color:#f4f4f4;transform:scaleX(0.9750);">6579,7689</span>
<span class="t" style="left:663.40px;top:178.93px;font-size:16.5px;color:#f4f4f4;transform:scaleX(0.9750);">6565,1866</span>
<span class="t" style="left:749.40px;top:178.93px;font-size:16.5px;color:#f4f4f4;transform:scaleX(0.9750);">6547,5182</span>
<span class="t" style="left:835.50px;top:178.93px;font-size:16.5px;color:#f4f4f4;transform:scaleX(0.9750);">6571,1755</span>
<span class="t" style="left:921.50px;top:178.93px;font-size:16.5px;color:#f4f4f4;transform:scaleX(0.9750);">6559,1380</span>
<span class="t" style="left:1007.60px;top:178.93px;font-size:16.5px;color:#f4f4f4;transform:scaleX(0.9750);">6505,3310</span>
<div style="position:absolute;left:0;top:200.0px;width:1040px;height:28.2px;background:#444444;"></div>
<span class="t" style="left:4.00px;top:207.03px;font-size:16.5px;color:#f4f4f4;transform:scaleX(0.9634);">ΔE 2000</span>
<span class="t" style="left:137.70px;top:207.03px;font-size:16.5px;color:#f4f4f4;transform:scaleX(0.9750);">1,1133</span>
<span class="t" style="left:233.00px;top:207.03px;font-size:16.5px;color:#f4f4f4;transform:scaleX(0.9750);">1,9719</span>
<span class="t" style="left:319.00px;top:207.03px;font-size:16.5px;color:#f4f4f4;transform:scaleX(0.9750);">1,3362</span>
<span class="t" style="left:404.90px;top:207.03px;font-size:16.5px;color:#f4f4f4;transform:scaleX(0.9750);">0,6854</span>
<span class="t" style="left:491.20px;top:207.03px;font-size:16.5px;color:#f4f4f4;transform:scaleX(0.9750);">0,5928</span>
<span class="t" style="left:577.40px;top:207.03px;font-size:16.5px;color:#f4f4f4;transform:scaleX(0.9750);">0,7138</span>
<span class="t" style="left:663.40px;top:207.03px;font-size:16.5px;color:#f4f4f4;transform:scaleX(0.9750);">0,6060</span>
<span class="t" style="left:749.40px;top:207.03px;font-size:16.5px;color:#f4f4f4;transform:scaleX(0.9750);">0,7382</span>
<span class="t" style="left:835.50px;top:207.03px;font-size:16.5px;color:#f4f4f4;transform:scaleX(0.9750);">0,6279</span>
<span class="t" style="left:921.50px;top:207.03px;font-size:16.5px;color:#f4f4f4;transform:scaleX(0.9750);">0,5954</span>
<span class="t" style="left:1007.60px;top:207.03px;font-size:16.5px;color:#f4f4f4;transform:scaleX(0.9750);">0,0412</span>
</div>
<div style="position:absolute;left:855px;top:959px;width:1039px;height:17px;background:#3c3c3c;"></div>
<div style="position:absolute;left:858px;top:960px;width:18px;height:15px;background:linear-gradient(180deg,#8a8a8a,#6e6e6e);border-radius:3px;"></div>
<svg width="1920" height="1080"><path d="M863 967.5l7-5v10z" fill="#2a2a2a"/><path d="M1888 967.5l-7-5v10z" fill="#2a2a2a"/><path d="M1902.5 781l-6 6.5h12z" fill="#2a2a2a"/><path d="M1902.5 951l-6-6.500h12z" fill="#2a2a2a"/></svg>
<div style="position:absolute;left:873px;top:961px;width:955px;height:14px;background:#2b2b2b;border-radius:7px;"></div>
<div style="position:absolute;left:1876px;top:960px;width:18px;height:15px;background:linear-gradient(180deg,#8a8a8a,#6e6e6e);border-radius:3px;"></div>
<div style="position:absolute;left:1894px;top:772px;width:18px;height:187px;background:#3c3c3c;"></div>
<div style="position:absolute;left:1895px;top:774px;width:15px;height:16px;background:linear-gradient(180deg,#8a8a8a,#6e6e6e);border-radius:3px;"></div>
<div style="position:absolute;left:1896px;top:792px;width:13px;height:126px;background:#2b2b2b;border-radius:6px;"></div>
<div style="position:absolute;left:1895px;top:942px;width:15px;height:16px;background:linear-gradient(180deg,#8a8a8a,#6e6e6e);border-radius:3px;"></div>
<svg width="1920" height="1080"><path d="M863 967.5l7-5v10z" fill="#333"/><path d="M1889 967.5l-7-5v10z" fill="#333"/><path d="M1902.5 778l-6 6.5h12z" fill="#333"/><path d="M1902.5 954l-6-6.500h12z" fill="#333"/></svg>
<div style="position:absolute;left:201px;top:978px;width:1719px;height:62px;background:#303030;"></div>
<div style="position:absolute;left:201px;top:1038.8px;width:1719px;height:1.2px;background:#222;"></div>
<div style="position:absolute;left:201.00px;top:978px;width:125.2px;height:60.5px;background:linear-gradient(180deg,#a4a4a4 0%,#8e8e8e 28%,#707070 68%,#5a5a5a 100%);border-radius:5px 5px 3px 3px;"></div>
<div style="position:absolute;left:205.80px;top:982.8px;width:115.4px;height:36.4px;background:#000000;border-radius:4px;box-shadow:0 1px 0 0.5px rgba(225,225,225,.6),0 0 0 1px rgba(170,170,170,.5),inset 2px 2px 2px rgba(0,0,0,.28);"></div>
<span class="t" style="left:260.54px;top:1025.39px;font-size:11px;color:#3a3a3a;font-weight:bold;">0</span>
<div style="position:absolute;left:327.75px;top:978px;width:125.2px;height:60.5px;background:linear-gradient(180deg,#a4a4a4 0%,#8e8e8e 28%,#707070 68%,#5a5a5a 100%);border-radius:5px 5px 3px 3px;"></div>
<div style="position:absolute;left:332.55px;top:982.8px;width:115.4px;height:36.4px;background:#1a1a1a;border-radius:4px;box-shadow:0 1px 0 0.5px rgba(225,225,225,.6),0 0 0 1px rgba(170,170,170,.5),inset 2px 2px 2px rgba(0,0,0,.28);"></div>
<span class="t" style="left:384.23px;top:1025.39px;font-size:11px;color:#3a3a3a;font-weight:bold;">10</span>
<div style="position:absolute;left:454.50px;top:978px;width:125.2px;height:60.5px;background:linear-gradient(180deg,#a4a4a4 0%,#8e8e8e 28%,#707070 68%,#5a5a5a 100%);border-radius:5px 5px 3px 3px;"></div>
<div style="position:absolute;left:459.30px;top:982.8px;width:115.4px;height:36.4px;background:#333333;border-radius:4px;box-shadow:0 1px 0 0.5px rgba(225,225,225,.6),0 0 0 1px rgba(170,170,170,.5),inset 2px 2px 2px rgba(0,0,0,.28);"></div>
<span class="t" style="left:510.98px;top:1025.39px;font-size:11px;color:#3a3a3a;font-weight:bold;">20</span>
<div style="position:absolute;left:581.25px;top:978px;width:125.2px;height:60.5px;background:linear-gradient(180deg,#a4a4a4 0%,#8e8e8e 28%,#707070 68%,#5a5a5a 100%);border-radius:5px 5px 3px 3px;"></div>
<div style="position:absolute;left:586.05px;top:982.8px;width:115.4px;height:36.4px;background:#4d4d4d;border-radius:4px;box-shadow:0 1px 0 0.5px rgba(225,225,225,.6),0 0 0 1px rgba(170,170,170,.5),inset 2px 2px 2px rgba(0,0,0,.28);"></div>
<span class="t" style="left:637.73px;top:1025.39px;font-size:11px;color:#3a3a3a;font-weight:bold;">30</span>
<div style="position:absolute;left:708.00px;top:978px;width:125.2px;height:60.5px;background:linear-gradient(180deg,#a4a4a4 0%,#8e8e8e 28%,#707070 68%,#5a5a5a 100%);border-radius:5px 5px 3px 3px;"></div>
<div style="position:absolute;left:712.80px;top:982.8px;width:115.4px;height:36.4px;background:#666666;border-radius:4px;box-shadow:0 1px 0 0.5px rgba(225,225,225,.6),0 0 0 1px rgba(170,170,170,.5),inset 2px 2px 2px rgba(0,0,0,.28);"></div>
<span class="t" style="left:764.48px;top:1025.39px;font-size:11px;color:#3a3a3a;font-weight:bold;">40</span>
<div style="position:absolute;left:834.75px;top:978px;width:125.2px;height:60.5px;background:linear-gradient(180deg,#a4a4a4 0%,#8e8e8e 28%,#707070 68%,#5a5a5a 100%);border-radius:5px 5px 3px 3px;"></div>
<div style="position:absolute;left:839.55px;top:982.8px;width:115.4px;height:36.4px;background:#808080;border-radius:4px;box-shadow:0 1px 0 0.5px rgba(225,225,225,.6),0 0 0 1px rgba(170,170,170,.5),inset 2px 2px 2px rgba(0,0,0,.28);"></div>
<span class="t" style="left:891.23px;top:1025.39px;font-size:11px;color:#3a3a3a;font-weight:bold;">50</span>
<div style="position:absolute;left:961.50px;top:978px;width:125.2px;height:60.5px;background:linear-gradient(180deg,#a4a4a4 0%,#8e8e8e 28%,#707070 68%,#5a5a5a 100%);border-radius:5px 5px 3px 3px;"></div>
<div style="position:absolute;left:966.30px;top:982.8px;width:115.4px;height:36.4px;background:#999999;border-radius:4px;box-shadow:0 1px 0 0.5px rgba(225,225,225,.6),0 0 0 1px rgba(170,170,170,.5),inset 2px 2px 2px rgba(0,0,0,.28);"></div>
<span class="t" style="left:1017.98px;top:1025.39px;font-size:11px;color:#3a3a3a;font-weight:bold;">60</span>
<div style="position:absolute;left:1088.25px;top:978px;width:125.2px;height:60.5px;background:linear-gradient(180deg,#a4a4a4 0%,#8e8e8e 28%,#707070 68%,#5a5a5a 100%);border-radius:5px 5px 3px 3px;"></div>
<div style="position:absolute;left:1093.05px;top:982.8px;width:115.4px;height:36.4px;background:#b3b3b3;border-radius:4px;box-shadow:0 1px 0 0.5px rgba(225,225,225,.6),0 0 0 1px rgba(170,170,170,.5),inset 2px 2px 2px rgba(0,0,0,.28);"></div>
<span class="t" style="left:1144.73px;top:1025.39px;font-size:11px;color:#3a3a3a;font-weight:bold;">70</span>
<div style="position:absolute;left:1215.00px;top:978px;width:125.2px;height:60.5px;background:linear-gradient(180deg,#a4a4a4 0%,#8e8e8e 28%,#707070 68%,#5a5a5a 100%);border-radius:5px 5px 3px 3px;"></div>
<div style="position:absolute;left:1219.80px;top:982.8px;width:115.4px;height:36.4px;background:#cccccc;border-radius:4px;box-shadow:0 1px 0 0.5px rgba(225,225,225,.6),0 0 0 1px rgba(170,170,170,.5),inset 2px 2px 2px rgba(0,0,0,.28);"></div>
<span class="t" style="left:1271.48px;top:1025.39px;font-size:11px;color:#3a3a3a;font-weight:bold;">80</span>
<div style="position:absolute;left:1341.75px;top:978px;width:125.2px;height:60.5px;background:linear-gradient(180deg,#a4a4a4 0%,#8e8e8e 28%,#707070 68%,#5a5a5a 100%);border-radius:5px 5px 3px 3px;"></div>
<div style="position:absolute;left:1346.55px;top:982.8px;width:115.4px;height:36.4px;background:#e6e6e6;border-radius:4px;box-shadow:0 1px 0 0.5px rgba(225,225,225,.6),0 0 0 1px rgba(170,170,170,.5),inset 2px 2px 2px rgba(0,0,0,.28);"></div>
<span class="t" style="left:1398.23px;top:1025.39px;font-size:11px;color:#3a3a3a;font-weight:bold;">90</span>
<div style="position:absolute;left:1468.50px;top:978px;width:125.2px;height:60.5px;background:linear-gradient(180deg,#505050,#343434);border-radius:5px 5px 3px 3px;"></div>
<div style="position:absolute;left:1473.30px;top:982.8px;width:115.4px;height:36.4px;background:#ffffff;border-radius:4px;box-shadow:0 1px 0 0.5px rgba(225,225,225,.6),0 0 0 1px rgba(170,170,170,.5),inset 2px 2px 2px rgba(0,0,0,.28);"></div>
<span class="t" style="left:1521.92px;top:1025.39px;font-size:11px;color:#f4f4f4;font-weight:bold;">100</span>
<div style="position:absolute;left:1597px;top:978px;width:48px;height:17.5px;background:linear-gradient(180deg,#979797 0%,#828282 45%,#626262 100%);border-radius:5px 0 0 0;box-shadow:inset 0 1px 0 #a0a0a0;"></div>
<div style="position:absolute;left:1597px;top:996.5px;width:48px;height:42px;background:linear-gradient(180deg,#868686,#626262);box-shadow:inset 0 1px 0 #9a9a9a;"></div>
<div style="position:absolute;left:1612px;top:980px;width:18px;height:14px;border-radius:50%;background:linear-gradient(180deg,#707070,#989898);"></div>
<div style="position:absolute;left:1604.5px;top:1002px;width:32.5px;height:32px;border:2px solid #1e1e1e;border-radius:5px;box-sizing:border-box;background:linear-gradient(180deg,#8c8c8c 0%,#7c7c7c 49%,#686868 51%,#6e6e6e 100%);box-shadow:0 0 0 1px #9a9a9a;"></div>
<div style="position:absolute;left:1614px;top:1011px;width:14px;height:13.5px;background:#000;"></div>
<div style="position:absolute;left:1647.2px;top:978px;width:44.2px;height:30px;background:linear-gradient(180deg,#979797 0%,#828282 45%,#626262 100%);box-shadow:inset 0 1px 0 #a0a0a0,inset 1px 0 0 #8a8a8a;"></div>
<div style="position:absolute;left:1659.4px;top:983px;width:20px;height:20px;border-radius:50%;background:linear-gradient(180deg,#6e6e6e,#9a9a9a);"></div>
<div style="position:absolute;left:1692.3px;top:978px;width:44.2px;height:30px;background:linear-gradient(180deg,#979797 0%,#828282 45%,#626262 100%);box-shadow:inset 0 1px 0 #a0a0a0,inset 1px 0 0 #8a8a8a;"></div>
<div style="position:absolute;left:1704.5px;top:983px;width:20px;height:20px;border-radius:50%;background:linear-gradient(180deg,#6e6e6e,#9a9a9a);"></div>
<div style="position:absolute;left:1737.4px;top:978px;width:44.2px;height:30px;background:linear-gradient(180deg,#979797 0%,#828282 45%,#626262 100%);box-shadow:inset 0 1px 0 #a0a0a0,inset 1px 0 0 #8a8a8a;"></div>
<div style="position:absolute;left:1749.6px;top:983px;width:20px;height:20px;border-radius:50%;background:linear-gradient(180deg,#6e6e6e,#9a9a9a);"></div>
<div style="position:absolute;left:1782.4px;top:978px;width:44.2px;height:30px;background:linear-gradient(180deg,#979797 0%,#828282 45%,#626262 100%);box-shadow:inset 0 1px 0 #a0a0a0,inset 1px 0 0 #8a8a8a;"></div>
<div style="position:absolute;left:1794.6px;top:983px;width:20px;height:20px;border-radius:50%;background:linear-gradient(180deg,#6e6e6e,#9a9a9a);"></div>
<div style="position:absolute;left:1827.5px;top:978px;width:44.2px;height:30px;background:linear-gradient(180deg,#979797 0%,#828282 45%,#626262 100%);box-shadow:inset 0 1px 0 #a0a0a0,inset 1px 0 0 #8a8a8a;"></div>
<div style="position:absolute;left:1839.7px;top:983px;width:20px;height:20px;border-radius:50%;background:linear-gradient(180deg,#6e6e6e,#9a9a9a);"></div>
<div style="position:absolute;left:1872.2px;top:978px;width:48px;height:30px;background:#3a3a3a;"></div>
<div style="position:absolute;left:1886px;top:983px;width:20px;height:20px;border-radius:50%;background:#2e2e2e;"></div>
<div style="position:absolute;left:1645.8px;top:1009px;width:136.4px;height:29.8px;background:linear-gradient(180deg,#aaaaaa 0%,#909090 40%,#6c6c6c 100%);border-radius:5px 0 0 5px;box-shadow:inset 0 1px 0 #a4a4a4;"></div>
<div style="position:absolute;left:1783.2px;top:1009px;width:134.6px;height:29.8px;background:linear-gradient(180deg,#aaaaaa 0%,#909090 40%,#6c6c6c 100%);border-radius:0 6px 6px 0;box-shadow:inset 0 1px 0 #a4a4a4;"></div>
<div style="position:absolute;left:1667.2px;top:1014.3px;width:19.4px;height:19.4px;border-radius:50%;background:linear-gradient(180deg,#7a7a7a,#a4a4a4);"></div>
<div style="position:absolute;left:1880.3px;top:1014.3px;width:19.4px;height:19.4px;border-radius:50%;background:linear-gradient(180deg,#7a7a7a,#a4a4a4);"></div>
<span class="t" style="left:1702.60px;top:1012.87px;font-size:22.6px;color:#2c2c2c;transform:scaleX(1.0349);-webkit-text-stroke:0.75px #2c2c2c;">Back</span>
<span class="t" style="left:1809.00px;top:1012.87px;font-size:22.6px;color:#2c2c2c;transform:scaleX(1.1513);-webkit-text-stroke:0.75px #2c2c2c;">Next</span>
<svg width="1920" height="1080"><path d="M1616.5 990.5l4.5-4.5l4.5 4.500z" fill="#2c2c2c"/><path d="M1676.500 1019.500l-4.300 4.700l4.300 4.700M1682 1019.500l-4.300 4.700l4.300 4.700M1885 1019.500l4.300 4.700l-4.300 4.700M1890.500 1019.500l4.300 4.700l-4.300 4.700" fill="none" stroke="#2a2a2a" stroke-width="1.800"/><rect x="1665.3" y="988.9" width="8.200" height="8.200" fill="#2a2a2a"/><path d="M1711.3 988.1v9.800l8.400-4.900z" fill="#2a2a2a"/><path d="M1756.6 988h-2v10h2M1762.6 988h2v10h-2" fill="none" stroke="#2a2a2a" stroke-width="2"/><path d="M1757.4 993h1.600M1760.3 993h1.600" stroke="#2a2a2a" stroke-width="1.800"/><path d="M1804.6 993c-2-3.200-6.500-3.200-6.500 0s4.500 3.200 6.500 0s6.500-3.200 6.500 0s-4.500 3.200-6.500 0z" fill="none" stroke="#2a2a2a" stroke-width="1.5"/><path d="M1844.7 992a5.200 5.200 0 0 1 9-2.500M1854.7 994a5.200 5.200 0 0 1-9 2.500" fill="none" stroke="#2a2a2a" stroke-width="1.8"/><path d="M1855.2 986.500v4.500h-4.500zM1844.2 999.500v-4.500h4.500z" fill="#2a2a2a"/></svg>
<div style="position:absolute;left:1353px;top:58px;width:154px;height:30px;background:linear-gradient(180deg,#4c4c4c 0%,#606060 60%,#6c6c6c 100%);border-radius:5px 5px 0 0;"></div>
<div style="position:absolute;left:1353px;top:58px;width:5.5px;height:30px;background:#14d214;border-radius:4px 0 0 0;"></div>
<div style="position:absolute;left:1471px;top:60px;width:1px;height:28px;background:#3a3a3a;"></div>
<div style="position:absolute;left:1513.5px;top:58px;width:155px;height:30px;background:linear-gradient(180deg,#4c4c4c 0%,#606060 60%,#6c6c6c 100%);border-radius:5px 5px 0 0;"></div>
<div style="position:absolute;left:1513.5px;top:58px;width:5.3px;height:30px;background:#e6e600;border-radius:4px 0 0 0;"></div>
<div style="position:absolute;left:1675px;top:58px;width:143.5px;height:30px;background:linear-gradient(180deg,#4c4c4c 0%,#606060 60%,#6c6c6c 100%);border-radius:5px 5px 0 0;"></div>
<div style="position:absolute;left:1674.8px;top:58px;width:5.3px;height:30px;background:#e6e600;border-radius:4px 0 0 0;"></div>
<div style="position:absolute;left:1442.0px;top:63.5px;width:19px;height:19px;border-radius:50%;background:linear-gradient(180deg,#3e3e3e,#565656);"></div>
<div style="position:absolute;left:1642.5px;top:63.5px;width:19px;height:19px;border-radius:50%;background:linear-gradient(180deg,#3e3e3e,#565656);"></div>
<div style="position:absolute;left:1792.5px;top:63.5px;width:19px;height:19px;border-radius:50%;background:linear-gradient(180deg,#3e3e3e,#565656);"></div>
<svg width="1920" height="1080"><path d="M1446.700 71.300h9.600l-4.800 5z M1647.200 71.300h9.600l-4.800 5z M1797.200 71.300h9.600l-4.800 5z" fill="#fff"/></svg>
<div style="position:absolute;left:1478.6px;top:59.8px;width:26.4px;height:26.4px;border-radius:50%;background:#0000f0;border:1.2px solid #e8e8ff;box-sizing:border-box;"></div>
<span class="t" style="left:1484.40px;top:68.36px;font-size:9.5px;color:#fff;font-weight:bold;transform:scaleX(0.9337);">238</span>
<span class="t" style="left:1361.50px;top:60.89px;font-size:11px;color:#f4f4f4;transform:scaleX(0.9639);">X-Rite i1Pro 2</span>
<span class="t" style="left:1361.50px;top:74.89px;font-size:11px;color:#f4f4f4;transform:scaleX(0.9629);">LCD Direct View</span>
<span class="t" style="left:1522.00px;top:60.89px;font-size:11px;color:#f4f4f4;transform:scaleX(0.9756);">Generic Calibration DVD</span>
<span class="t" style="left:1683.50px;top:60.89px;font-size:11px;color:#f4f4f4;transform:scaleX(0.9919);">Direct Display Control</span>
<div style="position:absolute;left:1821px;top:58.2px;width:33.8px;height:27.8px;background:linear-gradient(180deg,#969696 0%,#767676 48%,#565656 100%);border-radius:4.5px;border:1px solid #c6c6c6;box-sizing:border-box;"></div>
<div style="position:absolute;left:1828.2px;top:62.3px;width:19.4px;height:19.4px;border-radius:50%;background:linear-gradient(180deg,#5c5c5c,#8e8e8e);"></div>
<div style="position:absolute;left:1857px;top:58.2px;width:33.8px;height:27.8px;background:linear-gradient(180deg,#969696 0%,#767676 48%,#565656 100%);border-radius:4.5px;border:1px solid #c6c6c6;box-sizing:border-box;"></div>
<div style="position:absolute;left:1864.2px;top:62.3px;width:19.4px;height:19.4px;border-radius:50%;background:linear-gradient(180deg,#5c5c5c,#8e8e8e);"></div>
<div style="position:absolute;left:1893.2px;top:58.2px;width:33.8px;height:27.8px;background:linear-gradient(180deg,#969696 0%,#767676 48%,#565656 100%);border-radius:4.5px;border:1px solid #c6c6c6;box-sizing:border-box;"></div>
<div style="position:absolute;left:1900.4px;top:62.3px;width:19.4px;height:19.4px;border-radius:50%;background:linear-gradient(180deg,#5c5c5c,#8e8e8e);"></div>
<span class="t" style="left:1869.27px;top:65.08px;font-size:15.5px;color:#fff;font-weight:bold;">?</span>
<svg width="1920" height="1080"><rect x="1836.45" y="65.3" width="3.100" height="2.800" fill="#dcdcdc" transform="rotate(0 1838 72)"/><rect x="1836.45" y="65.3" width="3.100" height="2.800" fill="#dcdcdc" transform="rotate(45 1838 72)"/><rect x="1836.45" y="65.3" width="3.100" height="2.800" fill="#dcdcdc" transform="rotate(90 1838 72)"/><rect x="1836.45" y="65.3" width="3.100" height="2.800" fill="#dcdcdc" transform="rotate(135 1838 72)"/><rect x="1836.45" y="65.3" width="3.100" height="2.800" fill="#dcdcdc" transform="rotate(180 1838 72)"/><rect x="1836.45" y="65.3" width="3.100" height="2.800" fill="#dcdcdc" transform="rotate(225 1838 72)"/><rect x="1836.45" y="65.3" width="3.100" height="2.800" fill="#dcdcdc" transform="rotate(270 1838 72)"/><rect x="1836.45" y="65.3" width="3.100" height="2.800" fill="#dcdcdc" transform="rotate(315 1838 72)"/><circle cx="1838" cy="72" r="3.900" fill="none" stroke="#dcdcdc" stroke-width="2.400"/><path d="M1903.800 71.600l5.500-4.800v9.600z" fill="#fff"/></svg>
<div style="position:absolute;left:0px;top:1040px;width:1920px;height:40px;background:#04060c;"></div>
<div style="position:absolute;left:0px;top:1040px;width:48px;height:40px;background:#010103;"></div>
<div style="position:absolute;left:48px;top:1040px;width:344px;height:40px;background:#333333;"></div>
<span class="t" style="left:60.00px;top:1053.25px;font-size:15.3px;color:#9c9c9c;transform:scaleX(0.9550);">Windows durchsuchen</span>
<svg width="1920" height="1080"><path d="M16 1054.200l6.500-0.900v6.300h-6.500z M23.300 1053.200l8.700-1.200v7.600h-8.700z M16 1060.400h6.500v6.300l-6.500-0.900z M23.300 1060.400h8.700v7.600l-8.700-1.200z" fill="#fff"/><rect x="410.500" y="1053.500" width="11" height="13" fill="none" stroke="#fff" stroke-width="1.3"/><path d="M408.500 1055.500h-2v9h2M423.500 1055.500h2v9h-2" fill="none" stroke="#fff" stroke-width="1.2"/><path d="M455 1052h7l1.500 1.500h13v15h-21.500z" fill="#f6d67a"/><rect x="455" y="1055" width="21.500" height="13.500" fill="#fbe08c"/><path d="M459 1068.500v-7h13.500v7h-3.500v-3.500h-6.500v3.500z" fill="#38b0e8"/><path d="M505.500 1061c0.500-6 4.500-10.500 10-10.500c6 0 9.500 4.500 9.500 10.500v1.500h-13.500c0.300 3 2.800 4.500 6 4.500c2.500 0 4.800-0.700 6.500-1.800v4.300c-2 1.100-4.600 1.700-7.500 1.700c-6.500 0-10.500-3.900-10.500-9.700c0-3.800 2.200-6.800 5.200-8.300c-1.600 1.500-2.400 3.400-2.500 5.300h8.800c0-2.500-1.200-4.500-3.800-4.500c-3.400 0-6.500 2.800-8.200 7z" fill="#1b7ad8"/><ellipse cx="562.500" cy="1062" rx="10.500" ry="8.500" fill="#c8dcee" transform="rotate(-20 562.500 1062)"/><circle cx="557" cy="1060" r="1.800" fill="#d84a38"/><circle cx="561" cy="1056.500" r="1.800" fill="#58b848"/><circle cx="566" cy="1055.500" r="1.800" fill="#e8a838"/><circle cx="561.500" cy="1065" r="2" fill="#223"/><path d="M573.800 1050.500l-9.800 19.500" stroke="#e09040" stroke-width="2.200" stroke-linecap="round"/><path d="M575.300 1047.600l-2.800 4.600l-1.800-0.900l2.400-4.700z" fill="#f0d4a8"/><path d="M564.600 1068.800l-1.400 2.700" stroke="#c87828" stroke-width="1.400" stroke-linecap="round"/><rect x="602" y="1049.500" width="21.500" height="19.500" rx="2.500" fill="#101418"/><path d="M602 1060v-8a2.500 2.500 0 0 1 2.500-2.500h16.500a2.500 2.500 0 0 1 2.500 2.500v8z" fill="#2c70ac"/><rect x="606" y="1051" width="2.200" height="16.500" fill="#fff"/><rect x="610.500" y="1054" width="2.200" height="13.500" fill="#fff"/><rect x="615" y="1056" width="2.200" height="11.500" fill="#fff"/><rect x="619" y="1059" width="2" height="2.500" fill="#fff"/></svg>
<div style="position:absolute;left:638px;top:1040px;width:44.2px;height:40px;background:#33363b;"></div>
<div style="position:absolute;left:682.2px;top:1040px;width:3.8px;height:40px;background:#2b2e34;"></div>
<div style="position:absolute;left:638px;top:1077.6px;width:44.2px;height:2.4px;background:#76b9ed;"></div>
<div style="position:absolute;left:682.2px;top:1077.6px;width:3.8px;height:2.4px;background:#5c98c8;"></div>
<svg width="1920" height="1080"><defs><linearGradient id="cmi" x1="0.1" y1="0" x2="0.9" y2="0.8"><stop offset="0" stop-color="#7a1008"/><stop offset="0.3" stop-color="#e84818"/><stop offset="0.55" stop-color="#60301c"/><stop offset="0.8" stop-color="#d01c48"/><stop offset="1" stop-color="#a01038"/></linearGradient><linearGradient id="cmj" x1="0.6" y1="0" x2="0.3" y2="1"><stop offset="0" stop-color="#0a3a10" stop-opacity="0"/><stop offset="0.45" stop-color="#1a6a20" stop-opacity="0.55"/><stop offset="0.62" stop-color="#400820" stop-opacity="0"/><stop offset="0.8" stop-color="#0c2a0c" stop-opacity="0.800"/><stop offset="1" stop-color="#050805"/></linearGradient></defs><path d="M654.500 1048c5.500 2 13.500 9 17.600 15c-5 3.500-11 7-15 8.500c-4.500-5.500-6-16.500-2.600-23.500z" fill="url(#cmi)"/><path d="M654.500 1048c5.500 2 13.500 9 17.600 15c-5 3.500-11 7-15 8.500c-4.500-5.500-6-16.500-2.600-23.500z" fill="url(#cmj)"/><text x="661" y="1065.800" font-size="9.500" font-weight="bold" fill="#050505" stroke="#d8f0c0" stroke-width="1.300" stroke-opacity="0.750" paint-order="stroke" text-anchor="middle">5</text></svg>
<svg width="1920" height="1080"><rect x="1556" y="1056" width="16" height="9" fill="#8a8a8a"/><rect x="1556" y="1065" width="16" height="2.800" fill="#767676"/><rect x="1557.500" y="1055" width="5" height="6" fill="#c8c8c8"/><rect x="1563.500" y="1057" width="3" height="3" fill="#f0f0f0"/><rect x="1567.500" y="1058" width="3.500" height="5" fill="#e0e0e0"/><path d="M1557 1063.500h10" stroke="#e8e8e8" stroke-width="1.200"/><rect x="1580.600" y="1052.600" width="14.800" height="14.800" fill="#2c2c2c" stroke="#d4d4d4" stroke-width="1.200"/><path d="M1582.500 1055h11M1582.500 1057.200h11M1582.500 1059.400h11M1582.500 1061.600h11M1582.500 1063.800h11M1582.500 1066h11" stroke="#cfcfcf" stroke-width="1.100"/><rect x="1604.500" y="1052.300" width="15.500" height="15.400" fill="#3a3e48"/><path d="M1605.500 1060c2.500-4 6-5.500 9-5.500h4.500v11h-4.500c-3.500 0-6.500-1.500-9-5.500z" fill="#76b81a"/><path d="M1608.500 1060c1.500-2 3.500-2.800 5.500-2.800M1610 1061.500c1.500 1.500 4 1.500 6-0.500" fill="none" stroke="#3a3e48" stroke-width="1.100"/><rect x="1628" y="1051.800" width="16" height="16" rx="2" fill="#1c8ad8"/><path d="M1628 1063l5 4.800h-3a2 2 0 0 1-2-2z" fill="#f0a828"/><rect x="1632.500" y="1054" width="8.500" height="6.500" fill="none" stroke="#fff" stroke-width="1.100"/><path d="M1634.500 1055.500l4 3.500M1638.500 1055.500l-4 3.500" stroke="#fff" stroke-width="1"/><rect x="1636.500" y="1062" width="6" height="4" fill="#e8f4fc"/><path d="M1631 1061.500h5" stroke="#fff" stroke-width="1"/><circle cx="1659.400" cy="1060" r="7.300" fill="#1c242c" stroke="#a8a838" stroke-width="1.100"/><path d="M1662 1053a7.500 7.500 0 0 1 4.800 5" fill="none" stroke="#e87818" stroke-width="1.600"/><circle cx="1659.400" cy="1060" r="5.300" fill="#28343e" stroke="#487828" stroke-width="0.800"/><circle cx="1658.200" cy="1058.200" r="2.600" fill="#6c8496"/><path d="M1677 1057.500h3l5.500-4.500v13.700l-5.500-4.500h-3z" fill="#e87050"/><path d="M1688.300 1055.500c1.300 2.800 1.300 6.200 0 9M1690.800 1054c1.800 3.800 1.800 8.200 0 12" fill="none" stroke="#802818" stroke-width="1"/><path d="M1700.200 1053h13.500l2.500 2v10.500h-16z" fill="#22507e"/><rect x="1703" y="1056.300" width="10" height="6.600" fill="none" stroke="#fff" stroke-width="1.200"/><path d="M1704 1057h1.800a2.600 2.600 0 0 1 0 5.200h-1.800zM1712 1057h-1.800a2.600 2.600 0 0 0 0 5.200h1.800z" fill="#fff"/><rect x="1725" y="1053" width="14.500" height="10.500" fill="#8e8e8e"/><path d="M1739 1053v10.500" stroke="#b4b4bc" stroke-width="1"/><path d="M1724 1066.300h6.500M1733 1066.300h6.500" stroke="#8c8ce0" stroke-width="1.500"/><rect x="1752.300" y="1056.300" width="10.700" height="8" fill="none" stroke="#fff" stroke-width="1.200"/><rect x="1763.300" y="1058.800" width="1.400" height="3" fill="#fff"/><path d="M1754 1063v-2.500l2-1.500h3.500v4z" fill="#fff"/><path d="M1749.200 1053.500v3M1751.600 1053.500v3" stroke="#fff" stroke-width="1"/><path d="M1748.300 1056.500h4.200v2.800h-4.200zM1750.400 1059.300v5.200h2" stroke="#fff" stroke-width="1.100" fill="none"/><rect x="1775.600" y="1054.600" width="12" height="9" fill="none" stroke="#fff" stroke-width="1.200"/><path d="M1781.600 1063.600v3M1778 1067h8" stroke="#fff" stroke-width="1.200"/><rect x="1772.500" y="1055" width="4" height="4" fill="#04060c" stroke="#fff" stroke-width="1"/><path d="M1774.500 1059v8.300" stroke="#fff" stroke-width="1.100"/><path d="M1796.800 1057.700h2.200l3.300-3.200v10.600l-3.300-3.200h-2.200z" fill="none" stroke="#fff" stroke-width="1.100"/><path d="M1804.500 1057.800c0.900 1.300 0.900 3.100 0 4.400" fill="none" stroke="#fff" stroke-width="1"/><path d="M1806.800 1055.800c1.800 2.500 1.800 5.900 0 8.400" fill="none" stroke="#b8b8b8" stroke-width="1"/><path d="M1809.200 1053.800c2.700 3.700 2.700 8.700 0 12.400" fill="none" stroke="#707070" stroke-width="1"/><rect x="1820" y="1052.200" width="16" height="12.500" fill="#fff"/><path d="M1823 1055.500h10M1823 1058.500h10M1823 1061.500h4" stroke="#04060c" stroke-width="1.100"/><circle cx="1831.400" cy="1063.600" r="3.900" fill="#04060c" stroke="#fff" stroke-width="1.200"/><path d="M1829.300 1063.600h4.200" stroke="#fff" stroke-width="1.200"/><path d="M1915.700 1040v40" stroke="#6a6a6a" stroke-width="1"/></svg>
<span class="t" style="left:1863.70px;top:1044.84px;font-size:12px;color:#fff;transform:scaleX(0.9324);">20:58</span>
<span class="t" style="left:1849.95px;top:1061.54px;font-size:12px;color:#fff;transform:scaleX(0.9074);">02.02.2016</span>
</body></html>
